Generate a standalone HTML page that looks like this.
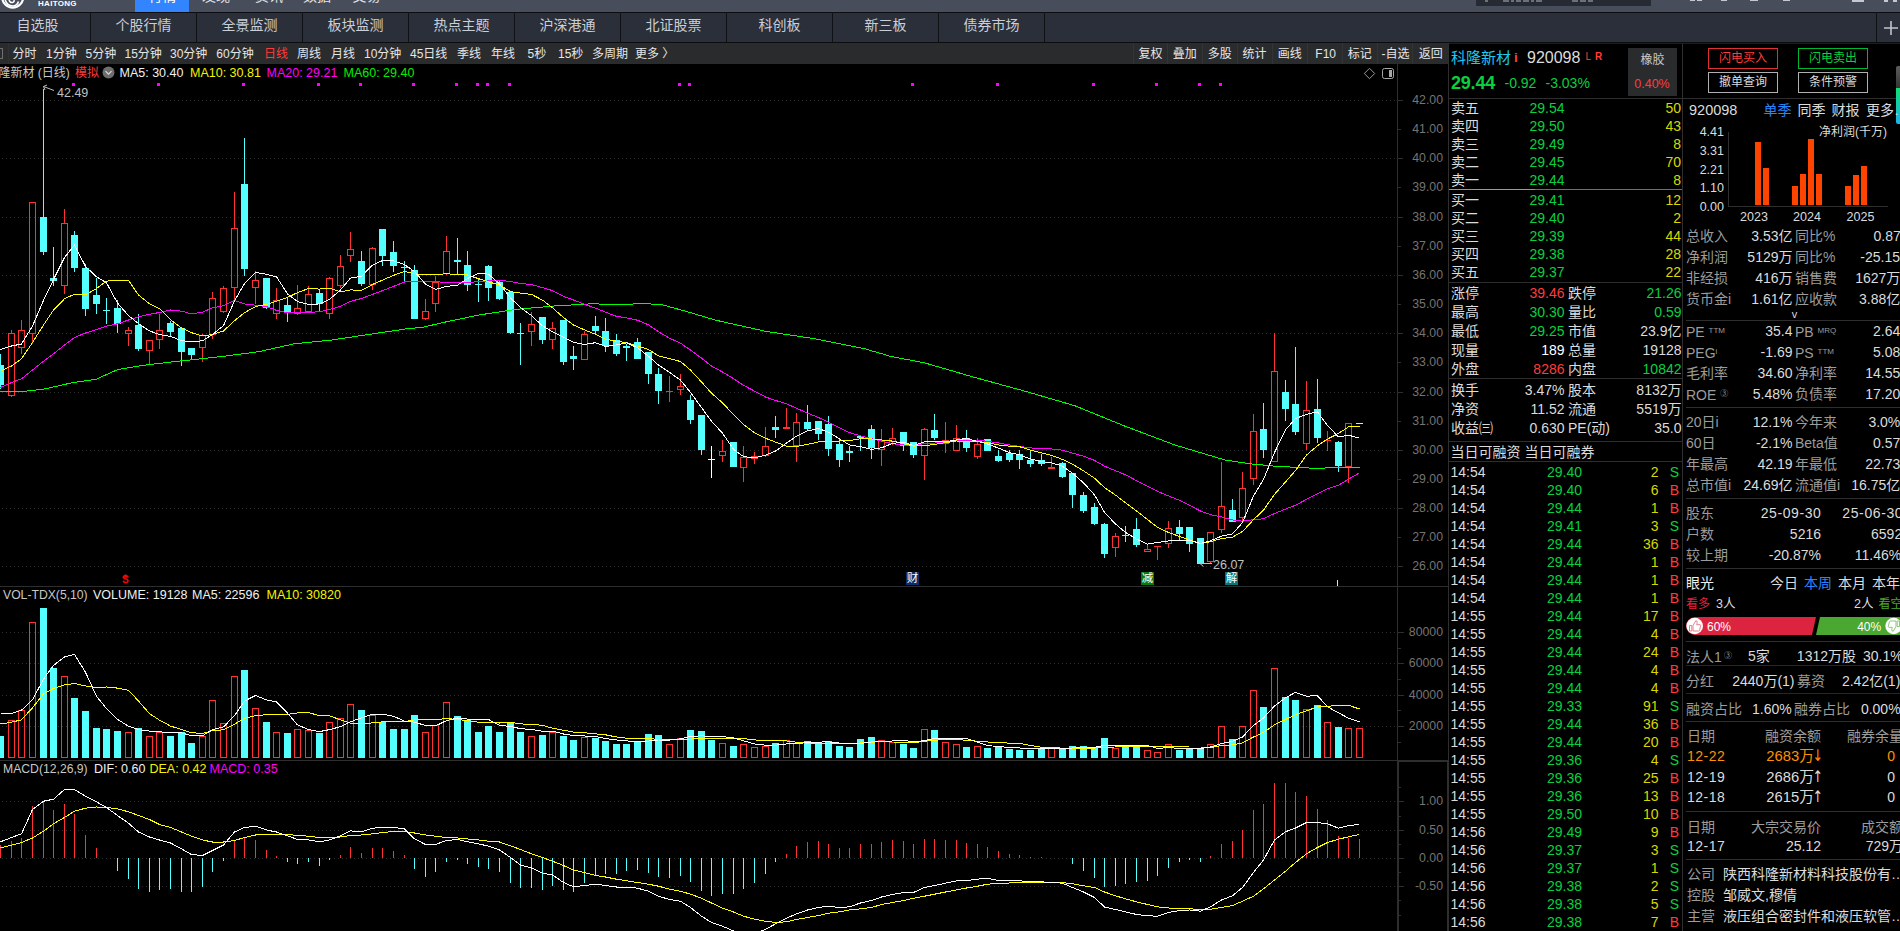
<!DOCTYPE html>
<html><head><meta charset="utf-8"><title>科隆新材 920098</title>
<style>
html,body{margin:0;padding:0;background:#000}
body{width:1900px;height:931px;position:relative;overflow:hidden;font-family:"Liberation Sans","Noto Sans CJK SC",sans-serif}
.b{position:absolute;display:block}
.t{position:absolute;display:block;white-space:nowrap;line-height:20px;font-family:"Liberation Sans","Noto Sans CJK SC",sans-serif}
small{font-size:8px;vertical-align:4px;letter-spacing:0}
i{display:inline-block;font-style:normal;font-size:16px;line-height:0;font-family:"DejaVu Sans",sans-serif;transform:scaleX(.78);margin:0 -4px 0 -3.2px}
</style></head><body>
<div class="b" style="left:0px;top:0px;width:1900px;height:12px;background:#474d5b"></div>
<div class="b" style="left:0px;top:12px;width:1900px;height:1px;background:#0c0d10"></div>
<div class="b" style="left:135px;top:0px;width:54px;height:12px;background:#3385ff"></div>
<div class="b" style="left:0;top:0;width:1900px;height:12px;overflow:hidden">
<svg class="b" style="left:0;top:0" width="30" height="12" viewBox="0 0 30 12"><circle cx="12.7" cy="-2.9" r="10.5" fill="none" stroke="#fff" stroke-width="2.2"/><path d="M5.2,0 Q7,5.8 12.5,6 Q17,6 18.5,1.5" fill="none" stroke="#fff" stroke-width="1.7"/><path d="M9,0 Q10,3 12.5,2.5 Q14.5,2 14,0" fill="none" stroke="#fff" stroke-width="1.5"/></svg>
<span class="t" style="left:38px;top:-3.2px;font-size:8px;font-weight:bold;color:#fff;line-height:14px;letter-spacing:0.3px">HAITONG</span>
<span class="t" style="left:148.5px;top:-14.2px;font-size:14px;color:#fff;line-height:20px">行情</span>
<span class="t" style="left:202px;top:-14.2px;font-size:14px;color:#e0e3ea;line-height:20px">发现</span>
<span class="t" style="left:255px;top:-14.2px;font-size:14px;color:#e0e3ea;line-height:20px">资讯</span>
<span class="t" style="left:303px;top:-14.2px;font-size:14px;color:#e0e3ea;line-height:20px">数据</span>
<span class="t" style="left:352.5px;top:-14.2px;font-size:14px;color:#e0e3ea;line-height:20px">交易</span>
</div>
<div class="b" style="left:1476px;top:0px;width:175px;height:6px;background:#262a33"></div>
<div class="b" style="left:1485px;top:0px;width:3px;height:2px;background:#6a707c"></div>
<div class="b" style="left:1503px;top:0px;width:6px;height:2px;background:#6a707c"></div>
<div class="b" style="left:1511px;top:0px;width:3px;height:2px;background:#6a707c"></div>
<div class="b" style="left:1516px;top:0px;width:5px;height:2px;background:#6a707c"></div>
<div class="b" style="left:1523px;top:0px;width:6px;height:2px;background:#6a707c"></div>
<div class="b" style="left:1531px;top:0px;width:3px;height:2px;background:#6a707c"></div>
<div class="b" style="left:1536px;top:0px;width:6px;height:2px;background:#6a707c"></div>
<div class="b" style="left:1572px;top:0px;width:6px;height:2px;background:#6a707c"></div>
<div class="b" style="left:1580px;top:0px;width:6px;height:2px;background:#6a707c"></div>
<div class="b" style="left:1588px;top:0px;width:5px;height:2px;background:#6a707c"></div>
<div class="b" style="left:1690px;top:0px;width:5px;height:1px;background:#c4c8d0"></div>
<div class="b" style="left:1697px;top:0px;width:5px;height:1px;background:#c4c8d0"></div>
<div class="b" style="left:1721px;top:0px;width:6px;height:1px;background:#c4c8d0"></div>
<div class="b" style="left:1750px;top:0px;width:8px;height:1px;background:#c4c8d0"></div>
<div class="b" style="left:1783px;top:0px;width:7px;height:1px;background:#c4c8d0"></div>
<div class="b" style="left:1852px;top:0px;width:12px;height:2px;background:#c4c8d0"></div>
<div class="b" style="left:1884px;top:0px;width:4px;height:2px;background:#c4c8d0"></div>
<div class="b" style="left:1893px;top:0px;width:4px;height:2px;background:#c4c8d0"></div>
<div class="b" style="left:0px;top:13px;width:1900px;height:29px;background:#2b2f39"></div>
<span class="t" style="left:-162.5px;width:400px;text-align:center;top:15.2px;font-size:14px;color:#c9ced8;">自选股</span>
<div class="b" style="left:90px;top:12px;width:1px;height:31px;background:#101114"></div>
<span class="t" style="left:-56.5px;width:400px;text-align:center;top:15.2px;font-size:14px;color:#c9ced8;">个股行情</span>
<div class="b" style="left:196px;top:12px;width:1px;height:31px;background:#101114"></div>
<span class="t" style="left:49.5px;width:400px;text-align:center;top:15.2px;font-size:14px;color:#c9ced8;">全景监测</span>
<div class="b" style="left:302px;top:12px;width:1px;height:31px;background:#101114"></div>
<span class="t" style="left:155.5px;width:400px;text-align:center;top:15.2px;font-size:14px;color:#c9ced8;">板块监测</span>
<div class="b" style="left:408px;top:12px;width:1px;height:31px;background:#101114"></div>
<span class="t" style="left:261.5px;width:400px;text-align:center;top:15.2px;font-size:14px;color:#c9ced8;">热点主题</span>
<div class="b" style="left:514px;top:12px;width:1px;height:31px;background:#101114"></div>
<span class="t" style="left:367.5px;width:400px;text-align:center;top:15.2px;font-size:14px;color:#c9ced8;">沪深港通</span>
<div class="b" style="left:620px;top:12px;width:1px;height:31px;background:#101114"></div>
<span class="t" style="left:473.5px;width:400px;text-align:center;top:15.2px;font-size:14px;color:#c9ced8;">北证股票</span>
<div class="b" style="left:726px;top:12px;width:1px;height:31px;background:#101114"></div>
<span class="t" style="left:579.5px;width:400px;text-align:center;top:15.2px;font-size:14px;color:#c9ced8;">科创板</span>
<div class="b" style="left:832px;top:12px;width:1px;height:31px;background:#101114"></div>
<span class="t" style="left:685.5px;width:400px;text-align:center;top:15.2px;font-size:14px;color:#c9ced8;">新三板</span>
<div class="b" style="left:938px;top:12px;width:1px;height:31px;background:#101114"></div>
<span class="t" style="left:791.5px;width:400px;text-align:center;top:15.2px;font-size:14px;color:#c9ced8;">债券市场</span>
<div class="b" style="left:1044px;top:12px;width:1px;height:31px;background:#101114"></div>
<div class="b" style="left:1876px;top:12px;width:1px;height:31px;background:#101114"></div>
<svg class="b" style="left:1882.7px;top:19.8px" width="16" height="16" viewBox="0 0 16 16"><path d="M8,1V15M1,8H15" stroke="#c0c4cc" stroke-width="1.6" fill="none"/></svg>
<div class="b" style="left:0px;top:42px;width:1900px;height:1px;background:#0c0d10"></div>
<div class="b" style="left:0px;top:43px;width:1448px;height:21px;background:#2a2b2d"></div>
<div class="b" style="left:1133px;top:43px;width:1px;height:21px;background:#333436"></div>
<div class="b" style="left:1167px;top:43px;width:1px;height:21px;background:#333436"></div>
<div class="b" style="left:1202px;top:43px;width:1px;height:21px;background:#333436"></div>
<div class="b" style="left:1237px;top:43px;width:1px;height:21px;background:#333436"></div>
<div class="b" style="left:1272px;top:43px;width:1px;height:21px;background:#333436"></div>
<div class="b" style="left:1307px;top:43px;width:1px;height:21px;background:#333436"></div>
<div class="b" style="left:1342px;top:43px;width:1px;height:21px;background:#333436"></div>
<div class="b" style="left:1377px;top:43px;width:1px;height:21px;background:#333436"></div>
<div class="b" style="left:1412px;top:43px;width:1px;height:21px;background:#333436"></div>
<div class="b" style="left:0px;top:48px;width:3px;height:11px;border:1px solid #707070;border-left:none;box-sizing:border-box;border-radius:0 1px 1px 0"></div>
<div class="b" style="left:8px;top:43px;width:1px;height:21px;background:#303133"></div>
<span class="t" style="left:12.5px;top:43.5px;font-size:12px;color:#e6e6e6;">分时</span>
<span class="t" style="left:46px;top:43.5px;font-size:12px;color:#e6e6e6;">1分钟</span>
<span class="t" style="left:85.5px;top:43.5px;font-size:12px;color:#e6e6e6;">5分钟</span>
<span class="t" style="left:124.5px;top:43.5px;font-size:12px;color:#e6e6e6;">15分钟</span>
<span class="t" style="left:170px;top:43.5px;font-size:12px;color:#e6e6e6;">30分钟</span>
<span class="t" style="left:216.3px;top:43.5px;font-size:12px;color:#e6e6e6;">60分钟</span>
<span class="t" style="left:264px;top:43.5px;font-size:12px;color:#ff3c3c;">日线</span>
<span class="t" style="left:297px;top:43.5px;font-size:12px;color:#e6e6e6;">周线</span>
<span class="t" style="left:331px;top:43.5px;font-size:12px;color:#e6e6e6;">月线</span>
<span class="t" style="left:364px;top:43.5px;font-size:12px;color:#e6e6e6;">10分钟</span>
<span class="t" style="left:410px;top:43.5px;font-size:12px;color:#e6e6e6;">45日线</span>
<span class="t" style="left:457px;top:43.5px;font-size:12px;color:#e6e6e6;">季线</span>
<span class="t" style="left:491px;top:43.5px;font-size:12px;color:#e6e6e6;">年线</span>
<span class="t" style="left:527.5px;top:43.5px;font-size:12px;color:#e6e6e6;">5秒</span>
<span class="t" style="left:558px;top:43.5px;font-size:12px;color:#e6e6e6;">15秒</span>
<span class="t" style="left:592px;top:43.5px;font-size:12px;color:#e6e6e6;">多周期</span>
<span class="t" style="left:635px;top:43.5px;font-size:12px;color:#e6e6e6;">更多 〉</span>
<span class="t" style="left:1138.5px;top:43.5px;font-size:12px;color:#e6e6e6;">复权</span>
<span class="t" style="left:1172.7px;top:43.5px;font-size:12px;color:#e6e6e6;">叠加</span>
<span class="t" style="left:1207.7px;top:43.5px;font-size:12px;color:#e6e6e6;">多股</span>
<span class="t" style="left:1242.4px;top:43.5px;font-size:12px;color:#e6e6e6;">统计</span>
<span class="t" style="left:1277.7px;top:43.5px;font-size:12px;color:#e6e6e6;">画线</span>
<span class="t" style="left:1315.3px;top:43.5px;font-size:12px;color:#e6e6e6;">F10</span>
<span class="t" style="left:1347.8px;top:43.5px;font-size:12px;color:#e6e6e6;">标记</span>
<span class="t" style="left:1381.5px;top:43.5px;font-size:12px;color:#e6e6e6;">-自选</span>
<span class="t" style="left:1418.7px;top:43.5px;font-size:12px;color:#e6e6e6;">返回</span>
<svg class="b" style="left:0;top:64px" width="1448" height="867" viewBox="0 64 1448 867" shape-rendering="crispEdges">
<style>.ax{font:12.3px "Liberation Sans",sans-serif;fill:#747474}</style>
<rect x="0" y="586" width="1448" height="1" fill="#2e2e2e"/>
<rect x="0" y="760" width="1448" height="1" fill="#2e2e2e"/>
<rect x="1397" y="64" width="1" height="867" fill="#2e2e2e"/>
<rect x="1398" y="761" width="50" height="1" fill="#2e2e2e"/>
<rect x="1398" y="761" width="1" height="170" fill="#2e2e2e"/>
<rect x="1447" y="761" width="1" height="170" fill="#2e2e2e"/>
<line x1="2" y1="566.5" x2="1396" y2="566.5" stroke="#2e2e2e" stroke-width="1" stroke-dasharray="1 3"/>
<rect x="1398" y="566" width="5" height="1" fill="#2e2e2e"/>
<text x="1443" y="570" text-anchor="end" class="ax">26.00</text>
<rect x="1398" y="537" width="3" height="1" fill="#2e2e2e"/>
<text x="1443" y="541" text-anchor="end" class="ax">27.00</text>
<line x1="2" y1="508.5" x2="1396" y2="508.5" stroke="#2e2e2e" stroke-width="1" stroke-dasharray="1 3"/>
<rect x="1398" y="508" width="5" height="1" fill="#2e2e2e"/>
<text x="1443" y="512" text-anchor="end" class="ax">28.00</text>
<rect x="1398" y="479" width="3" height="1" fill="#2e2e2e"/>
<text x="1443" y="483" text-anchor="end" class="ax">29.00</text>
<line x1="2" y1="450.5" x2="1396" y2="450.5" stroke="#2e2e2e" stroke-width="1" stroke-dasharray="1 3"/>
<rect x="1398" y="450" width="5" height="1" fill="#2e2e2e"/>
<text x="1443" y="454" text-anchor="end" class="ax">30.00</text>
<rect x="1398" y="421" width="3" height="1" fill="#2e2e2e"/>
<text x="1443" y="425" text-anchor="end" class="ax">31.00</text>
<line x1="2" y1="392.5" x2="1396" y2="392.5" stroke="#2e2e2e" stroke-width="1" stroke-dasharray="1 3"/>
<rect x="1398" y="392" width="5" height="1" fill="#2e2e2e"/>
<text x="1443" y="396" text-anchor="end" class="ax">32.00</text>
<rect x="1398" y="362" width="3" height="1" fill="#2e2e2e"/>
<text x="1443" y="366" text-anchor="end" class="ax">33.00</text>
<line x1="2" y1="333.5" x2="1396" y2="333.5" stroke="#2e2e2e" stroke-width="1" stroke-dasharray="1 3"/>
<rect x="1398" y="333" width="5" height="1" fill="#2e2e2e"/>
<text x="1443" y="337" text-anchor="end" class="ax">34.00</text>
<rect x="1398" y="304" width="3" height="1" fill="#2e2e2e"/>
<text x="1443" y="308" text-anchor="end" class="ax">35.00</text>
<line x1="2" y1="275.5" x2="1396" y2="275.5" stroke="#2e2e2e" stroke-width="1" stroke-dasharray="1 3"/>
<rect x="1398" y="275" width="5" height="1" fill="#2e2e2e"/>
<text x="1443" y="279" text-anchor="end" class="ax">36.00</text>
<rect x="1398" y="246" width="3" height="1" fill="#2e2e2e"/>
<text x="1443" y="250" text-anchor="end" class="ax">37.00</text>
<line x1="2" y1="217.5" x2="1396" y2="217.5" stroke="#2e2e2e" stroke-width="1" stroke-dasharray="1 3"/>
<rect x="1398" y="217" width="5" height="1" fill="#2e2e2e"/>
<text x="1443" y="221" text-anchor="end" class="ax">38.00</text>
<rect x="1398" y="187" width="3" height="1" fill="#2e2e2e"/>
<text x="1443" y="191" text-anchor="end" class="ax">39.00</text>
<line x1="2" y1="158.5" x2="1396" y2="158.5" stroke="#2e2e2e" stroke-width="1" stroke-dasharray="1 3"/>
<rect x="1398" y="158" width="5" height="1" fill="#2e2e2e"/>
<text x="1443" y="162" text-anchor="end" class="ax">40.00</text>
<rect x="1398" y="129" width="3" height="1" fill="#2e2e2e"/>
<text x="1443" y="133" text-anchor="end" class="ax">41.00</text>
<line x1="2" y1="100.5" x2="1396" y2="100.5" stroke="#2e2e2e" stroke-width="1" stroke-dasharray="1 3"/>
<rect x="1398" y="100" width="5" height="1" fill="#2e2e2e"/>
<text x="1443" y="104" text-anchor="end" class="ax">42.00</text>
<line x1="2" y1="726.5" x2="1396" y2="726.5" stroke="#2e2e2e" stroke-width="1" stroke-dasharray="1 3"/>
<rect x="1398" y="726" width="6" height="1" fill="#2e2e2e"/>
<text x="1443" y="730" text-anchor="end" class="ax">20000</text>
<rect x="1398" y="742" width="3" height="1" fill="#2e2e2e"/>
<line x1="2" y1="695.5" x2="1396" y2="695.5" stroke="#2e2e2e" stroke-width="1" stroke-dasharray="1 3"/>
<rect x="1398" y="695" width="6" height="1" fill="#2e2e2e"/>
<text x="1443" y="699" text-anchor="end" class="ax">40000</text>
<rect x="1398" y="710" width="3" height="1" fill="#2e2e2e"/>
<line x1="2" y1="663.5" x2="1396" y2="663.5" stroke="#2e2e2e" stroke-width="1" stroke-dasharray="1 3"/>
<rect x="1398" y="663" width="6" height="1" fill="#2e2e2e"/>
<text x="1443" y="667" text-anchor="end" class="ax">60000</text>
<rect x="1398" y="679" width="3" height="1" fill="#2e2e2e"/>
<line x1="2" y1="632.5" x2="1396" y2="632.5" stroke="#2e2e2e" stroke-width="1" stroke-dasharray="1 3"/>
<rect x="1398" y="632" width="6" height="1" fill="#2e2e2e"/>
<text x="1443" y="636" text-anchor="end" class="ax">80000</text>
<rect x="1398" y="648" width="3" height="1" fill="#2e2e2e"/>
<line x1="2" y1="801.5" x2="1396" y2="801.5" stroke="#2e2e2e" stroke-width="1" stroke-dasharray="1 3"/>
<rect x="1398" y="801" width="6" height="1" fill="#2e2e2e"/>
<text x="1443" y="805" text-anchor="end" class="ax">1.00</text>
<line x1="2" y1="830.5" x2="1396" y2="830.5" stroke="#2e2e2e" stroke-width="1" stroke-dasharray="1 3"/>
<rect x="1398" y="830" width="6" height="1" fill="#2e2e2e"/>
<text x="1443" y="834" text-anchor="end" class="ax">0.50</text>
<line x1="2" y1="858.5" x2="1396" y2="858.5" stroke="#2e2e2e" stroke-width="1" stroke-dasharray="1 3"/>
<rect x="1398" y="858" width="6" height="1" fill="#2e2e2e"/>
<text x="1443" y="862" text-anchor="end" class="ax">0.00</text>
<line x1="2" y1="886.5" x2="1396" y2="886.5" stroke="#2e2e2e" stroke-width="1" stroke-dasharray="1 3"/>
<rect x="1398" y="886" width="6" height="1" fill="#2e2e2e"/>
<text x="1443" y="890" text-anchor="end" class="ax">-0.50</text>
<rect x="1398" y="787" width="3" height="1" fill="#2e2e2e"/>
<rect x="1398" y="816" width="3" height="1" fill="#2e2e2e"/>
<rect x="1398" y="844" width="3" height="1" fill="#2e2e2e"/>
<rect x="1398" y="872" width="3" height="1" fill="#2e2e2e"/>
<rect x="1398" y="900" width="3" height="1" fill="#2e2e2e"/>
<rect x="1398" y="915" width="3" height="1" fill="#2e2e2e"/>
<rect x="0" y="354" width="1" height="35" fill="#54ffff"/>
<rect x="-3" y="365" width="7" height="20" fill="#54ffff"/>
<rect x="11" y="330" width="1" height="3" fill="#ff3232"/>
<rect x="11" y="396" width="1" height="1" fill="#ff3232"/>
<rect x="8.5" y="333.5" width="6" height="62" fill="none" stroke="#ff3232" stroke-width="1"/>
<rect x="21" y="320" width="1" height="10" fill="#ff3232"/>
<rect x="21" y="348" width="1" height="6" fill="#ff3232"/>
<rect x="18.5" y="330.5" width="6" height="17" fill="none" stroke="#ff3232" stroke-width="1"/>
<rect x="32" y="334" width="1" height="10" fill="#ff3232"/>
<rect x="29.5" y="202.5" width="6" height="131" fill="none" stroke="#ff3232" stroke-width="1"/>
<rect x="43" y="89" width="1" height="166" fill="#54ffff"/>
<rect x="40" y="217" width="7" height="35" fill="#54ffff"/>
<rect x="53" y="247" width="1" height="39" fill="#54ffff"/>
<rect x="50" y="278" width="7" height="3" fill="#54ffff"/>
<rect x="64" y="209" width="1" height="14" fill="#ff3232"/>
<rect x="64" y="286" width="1" height="8" fill="#ff3232"/>
<rect x="61.5" y="223.5" width="6" height="62" fill="none" stroke="#ff3232" stroke-width="1"/>
<rect x="74" y="231" width="1" height="41" fill="#54ffff"/>
<rect x="71" y="235" width="7" height="33" fill="#54ffff"/>
<rect x="85" y="264" width="1" height="52" fill="#54ffff"/>
<rect x="82" y="268" width="7" height="41" fill="#54ffff"/>
<rect x="96" y="278" width="1" height="36" fill="#54ffff"/>
<rect x="93" y="295" width="7" height="9" fill="#54ffff"/>
<rect x="106" y="298" width="1" height="26" fill="#54ffff"/>
<rect x="103" y="310" width="7" height="1" fill="#54ffff"/>
<rect x="117" y="300" width="1" height="33" fill="#54ffff"/>
<rect x="114" y="308" width="7" height="16" fill="#54ffff"/>
<rect x="128" y="327" width="1" height="3" fill="#ff3232"/>
<rect x="128" y="334" width="1" height="12" fill="#ff3232"/>
<rect x="125.5" y="330.5" width="6" height="3" fill="none" stroke="#ff3232" stroke-width="1"/>
<rect x="138" y="314" width="1" height="37" fill="#54ffff"/>
<rect x="135" y="325" width="7" height="24" fill="#54ffff"/>
<rect x="149" y="351" width="1" height="13" fill="#ff3232"/>
<rect x="146.5" y="340.5" width="6" height="10" fill="none" stroke="#ff3232" stroke-width="1"/>
<rect x="159" y="314" width="1" height="16" fill="#ff3232"/>
<rect x="159" y="340" width="1" height="9" fill="#ff3232"/>
<rect x="156.5" y="330.5" width="6" height="9" fill="none" stroke="#ff3232" stroke-width="1"/>
<rect x="170" y="321" width="1" height="15" fill="#54ffff"/>
<rect x="167" y="323" width="7" height="9" fill="#54ffff"/>
<rect x="181" y="327" width="1" height="39" fill="#54ffff"/>
<rect x="178" y="328" width="7" height="24" fill="#54ffff"/>
<rect x="191" y="348" width="1" height="11" fill="#54ffff"/>
<rect x="188" y="348" width="7" height="7" fill="#54ffff"/>
<rect x="202" y="334" width="1" height="1" fill="#ff3232"/>
<rect x="202" y="348" width="1" height="14" fill="#ff3232"/>
<rect x="199.5" y="335.5" width="6" height="12" fill="none" stroke="#ff3232" stroke-width="1"/>
<rect x="212" y="292" width="1" height="6" fill="#ff3232"/>
<rect x="212" y="335" width="1" height="4" fill="#ff3232"/>
<rect x="209.5" y="298.5" width="6" height="36" fill="none" stroke="#ff3232" stroke-width="1"/>
<rect x="223" y="286" width="1" height="2" fill="#ff3232"/>
<rect x="223" y="312" width="1" height="1" fill="#ff3232"/>
<rect x="220.5" y="288.5" width="6" height="23" fill="none" stroke="#ff3232" stroke-width="1"/>
<rect x="234" y="192" width="1" height="36" fill="#ff3232"/>
<rect x="234" y="288" width="1" height="12" fill="#ff3232"/>
<rect x="231.5" y="228.5" width="6" height="59" fill="none" stroke="#ff3232" stroke-width="1"/>
<rect x="244" y="138" width="1" height="138" fill="#54ffff"/>
<rect x="241" y="184" width="7" height="85" fill="#54ffff"/>
<rect x="255" y="271" width="1" height="9" fill="#ff3232"/>
<rect x="255" y="288" width="1" height="16" fill="#ff3232"/>
<rect x="252.5" y="280.5" width="6" height="7" fill="none" stroke="#ff3232" stroke-width="1"/>
<rect x="266" y="278" width="1" height="31" fill="#54ffff"/>
<rect x="263" y="278" width="7" height="30" fill="#54ffff"/>
<rect x="276" y="288" width="1" height="12" fill="#ff3232"/>
<rect x="276" y="314" width="1" height="5" fill="#ff3232"/>
<rect x="273.5" y="300.5" width="6" height="13" fill="none" stroke="#ff3232" stroke-width="1"/>
<rect x="287" y="297" width="1" height="25" fill="#54ffff"/>
<rect x="284" y="305" width="7" height="8" fill="#54ffff"/>
<rect x="297" y="285" width="1" height="23" fill="#ff3232"/>
<rect x="297" y="314" width="1" height="1" fill="#ff3232"/>
<rect x="294.5" y="308.5" width="6" height="5" fill="none" stroke="#ff3232" stroke-width="1"/>
<rect x="308" y="286" width="1" height="8" fill="#ff3232"/>
<rect x="305.5" y="294.5" width="6" height="17" fill="none" stroke="#ff3232" stroke-width="1"/>
<rect x="319" y="290" width="1" height="22" fill="#54ffff"/>
<rect x="316" y="293" width="7" height="11" fill="#54ffff"/>
<rect x="329" y="277" width="1" height="1" fill="#ff3232"/>
<rect x="329" y="314" width="1" height="5" fill="#ff3232"/>
<rect x="326.5" y="278.5" width="6" height="35" fill="none" stroke="#ff3232" stroke-width="1"/>
<rect x="340" y="255" width="1" height="11" fill="#ff3232"/>
<rect x="340" y="286" width="1" height="2" fill="#ff3232"/>
<rect x="337.5" y="266.5" width="6" height="19" fill="none" stroke="#ff3232" stroke-width="1"/>
<rect x="350" y="232" width="1" height="17" fill="#ff3232"/>
<rect x="350" y="256" width="1" height="6" fill="#ff3232"/>
<rect x="347.5" y="249.5" width="6" height="6" fill="none" stroke="#ff3232" stroke-width="1"/>
<rect x="361" y="251" width="1" height="35" fill="#54ffff"/>
<rect x="358" y="261" width="7" height="23" fill="#54ffff"/>
<rect x="372" y="247" width="1" height="1" fill="#ff3232"/>
<rect x="372" y="285" width="1" height="5" fill="#ff3232"/>
<rect x="369.5" y="248.5" width="6" height="36" fill="none" stroke="#ff3232" stroke-width="1"/>
<rect x="382" y="229" width="1" height="37" fill="#54ffff"/>
<rect x="379" y="229" width="7" height="27" fill="#54ffff"/>
<rect x="393" y="241" width="1" height="31" fill="#54ffff"/>
<rect x="390" y="252" width="7" height="14" fill="#54ffff"/>
<rect x="404" y="261" width="1" height="21" fill="#54ffff"/>
<rect x="401" y="267" width="7" height="1" fill="#54ffff"/>
<rect x="414" y="265" width="1" height="54" fill="#54ffff"/>
<rect x="411" y="270" width="7" height="49" fill="#54ffff"/>
<rect x="425" y="299" width="1" height="12" fill="#ff3232"/>
<rect x="425" y="319" width="1" height="1" fill="#ff3232"/>
<rect x="422.5" y="311.5" width="6" height="7" fill="none" stroke="#ff3232" stroke-width="1"/>
<rect x="435" y="276" width="1" height="6" fill="#ff3232"/>
<rect x="435" y="304" width="1" height="8" fill="#ff3232"/>
<rect x="432.5" y="282.5" width="6" height="21" fill="none" stroke="#ff3232" stroke-width="1"/>
<rect x="446" y="236" width="1" height="15" fill="#ff3232"/>
<rect x="446" y="274" width="1" height="1" fill="#ff3232"/>
<rect x="443.5" y="251.5" width="6" height="22" fill="none" stroke="#ff3232" stroke-width="1"/>
<rect x="457" y="238" width="1" height="36" fill="#54ffff"/>
<rect x="454" y="260" width="7" height="2" fill="#54ffff"/>
<rect x="467" y="251" width="1" height="40" fill="#54ffff"/>
<rect x="464" y="265" width="7" height="20" fill="#54ffff"/>
<rect x="478" y="279" width="1" height="23" fill="#54ffff"/>
<rect x="475" y="284" width="7" height="1" fill="#54ffff"/>
<rect x="488" y="265" width="1" height="36" fill="#54ffff"/>
<rect x="485" y="266" width="7" height="22" fill="#54ffff"/>
<rect x="499" y="281" width="1" height="19" fill="#54ffff"/>
<rect x="496" y="282" width="7" height="17" fill="#54ffff"/>
<rect x="510" y="292" width="1" height="42" fill="#54ffff"/>
<rect x="507" y="292" width="7" height="41" fill="#54ffff"/>
<rect x="520" y="323" width="1" height="42" fill="#54ffff"/>
<rect x="517" y="333" width="7" height="1" fill="#54ffff"/>
<rect x="531" y="312" width="1" height="12" fill="#ff3232"/>
<rect x="531" y="332" width="1" height="14" fill="#ff3232"/>
<rect x="528.5" y="324.5" width="6" height="7" fill="none" stroke="#ff3232" stroke-width="1"/>
<rect x="542" y="317" width="1" height="27" fill="#54ffff"/>
<rect x="539" y="317" width="7" height="23" fill="#54ffff"/>
<rect x="552" y="322" width="1" height="6" fill="#ff3232"/>
<rect x="552" y="340" width="1" height="9" fill="#ff3232"/>
<rect x="549.5" y="328.5" width="6" height="11" fill="none" stroke="#ff3232" stroke-width="1"/>
<rect x="563" y="320" width="1" height="45" fill="#54ffff"/>
<rect x="560" y="320" width="7" height="42" fill="#54ffff"/>
<rect x="573" y="346" width="1" height="24" fill="#54ffff"/>
<rect x="570" y="356" width="7" height="3" fill="#54ffff"/>
<rect x="584" y="331" width="1" height="3" fill="#ff3232"/>
<rect x="581.5" y="334.5" width="6" height="25" fill="none" stroke="#ff3232" stroke-width="1"/>
<rect x="595" y="316" width="1" height="18" fill="#54ffff"/>
<rect x="592" y="326" width="7" height="5" fill="#54ffff"/>
<rect x="605" y="318" width="1" height="34" fill="#54ffff"/>
<rect x="602" y="331" width="7" height="15" fill="#54ffff"/>
<rect x="616" y="334" width="1" height="22" fill="#54ffff"/>
<rect x="613" y="340" width="7" height="14" fill="#54ffff"/>
<rect x="626" y="344" width="1" height="17" fill="#54ffff"/>
<rect x="623" y="346" width="7" height="2" fill="#54ffff"/>
<rect x="637" y="338" width="1" height="21" fill="#54ffff"/>
<rect x="634" y="342" width="7" height="17" fill="#54ffff"/>
<rect x="648" y="352" width="1" height="32" fill="#54ffff"/>
<rect x="645" y="352" width="7" height="22" fill="#54ffff"/>
<rect x="658" y="368" width="1" height="36" fill="#54ffff"/>
<rect x="655" y="374" width="7" height="17" fill="#54ffff"/>
<rect x="669" y="376" width="1" height="15" fill="#ff3232"/>
<rect x="669" y="392" width="1" height="10" fill="#ff3232"/>
<rect x="666" y="391" width="7" height="1" fill="#ff3232"/>
<rect x="680" y="374" width="1" height="12" fill="#ff3232"/>
<rect x="680" y="390" width="1" height="5" fill="#ff3232"/>
<rect x="677.5" y="386.5" width="6" height="3" fill="none" stroke="#ff3232" stroke-width="1"/>
<rect x="690" y="395" width="1" height="29" fill="#54ffff"/>
<rect x="687" y="400" width="7" height="20" fill="#54ffff"/>
<rect x="701" y="415" width="1" height="40" fill="#54ffff"/>
<rect x="698" y="415" width="7" height="35" fill="#54ffff"/>
<rect x="711" y="446" width="1" height="32" fill="#ffffff"/>
<rect x="708" y="459" width="7" height="1" fill="#ffffff"/>
<rect x="722" y="440" width="1" height="11" fill="#ff3232"/>
<rect x="722" y="456" width="1" height="6" fill="#ff3232"/>
<rect x="719.5" y="451.5" width="6" height="4" fill="none" stroke="#ff3232" stroke-width="1"/>
<rect x="733" y="442" width="1" height="25" fill="#54ffff"/>
<rect x="730" y="442" width="7" height="25" fill="#54ffff"/>
<rect x="743" y="446" width="1" height="11" fill="#ff3232"/>
<rect x="743" y="468" width="1" height="14" fill="#ff3232"/>
<rect x="740.5" y="457.5" width="6" height="10" fill="none" stroke="#ff3232" stroke-width="1"/>
<rect x="754" y="452" width="1" height="4" fill="#ff3232"/>
<rect x="754" y="459" width="1" height="5" fill="#ff3232"/>
<rect x="751.5" y="456.5" width="6" height="2" fill="none" stroke="#ff3232" stroke-width="1"/>
<rect x="765" y="427" width="1" height="19" fill="#ff3232"/>
<rect x="765" y="456" width="1" height="1" fill="#ff3232"/>
<rect x="762.5" y="446.5" width="6" height="9" fill="none" stroke="#ff3232" stroke-width="1"/>
<rect x="775" y="416" width="1" height="22" fill="#54ffff"/>
<rect x="772" y="427" width="7" height="3" fill="#54ffff"/>
<rect x="786" y="408" width="1" height="19" fill="#ff3232"/>
<rect x="783.5" y="427.5" width="6" height="1" fill="none" stroke="#ff3232" stroke-width="1"/>
<rect x="796" y="413" width="1" height="9" fill="#ff3232"/>
<rect x="796" y="446" width="1" height="16" fill="#ff3232"/>
<rect x="793.5" y="422.5" width="6" height="23" fill="none" stroke="#ff3232" stroke-width="1"/>
<rect x="807" y="405" width="1" height="26" fill="#54ffff"/>
<rect x="804" y="422" width="7" height="7" fill="#54ffff"/>
<rect x="818" y="421" width="1" height="19" fill="#54ffff"/>
<rect x="815" y="421" width="7" height="13" fill="#54ffff"/>
<rect x="828" y="416" width="1" height="40" fill="#54ffff"/>
<rect x="825" y="424" width="7" height="25" fill="#54ffff"/>
<rect x="839" y="438" width="1" height="29" fill="#54ffff"/>
<rect x="836" y="444" width="7" height="16" fill="#54ffff"/>
<rect x="849" y="446" width="1" height="16" fill="#54ffff"/>
<rect x="846" y="451" width="7" height="2" fill="#54ffff"/>
<rect x="860" y="435" width="1" height="16" fill="#54ffff"/>
<rect x="857" y="436" width="7" height="2" fill="#54ffff"/>
<rect x="871" y="425" width="1" height="34" fill="#54ffff"/>
<rect x="868" y="429" width="7" height="19" fill="#54ffff"/>
<rect x="881" y="429" width="1" height="11" fill="#ff3232"/>
<rect x="881" y="450" width="1" height="16" fill="#ff3232"/>
<rect x="878.5" y="440.5" width="6" height="9" fill="none" stroke="#ff3232" stroke-width="1"/>
<rect x="892" y="428" width="1" height="10" fill="#ff3232"/>
<rect x="892" y="442" width="1" height="3" fill="#ff3232"/>
<rect x="889.5" y="438.5" width="6" height="3" fill="none" stroke="#ff3232" stroke-width="1"/>
<rect x="903" y="432" width="1" height="19" fill="#54ffff"/>
<rect x="900" y="432" width="7" height="14" fill="#54ffff"/>
<rect x="913" y="442" width="1" height="16" fill="#54ffff"/>
<rect x="910" y="442" width="7" height="13" fill="#54ffff"/>
<rect x="924" y="428" width="1" height="1" fill="#ff3232"/>
<rect x="924" y="456" width="1" height="24" fill="#ff3232"/>
<rect x="921.5" y="429.5" width="6" height="26" fill="none" stroke="#ff3232" stroke-width="1"/>
<rect x="934" y="414" width="1" height="26" fill="#54ffff"/>
<rect x="931" y="430" width="7" height="8" fill="#54ffff"/>
<rect x="945" y="422" width="1" height="18" fill="#ff3232"/>
<rect x="945" y="444" width="1" height="9" fill="#ff3232"/>
<rect x="942.5" y="440.5" width="6" height="3" fill="none" stroke="#ff3232" stroke-width="1"/>
<rect x="956" y="425" width="1" height="13" fill="#ff3232"/>
<rect x="953.5" y="438.5" width="6" height="12" fill="none" stroke="#ff3232" stroke-width="1"/>
<rect x="966" y="430" width="1" height="22" fill="#54ffff"/>
<rect x="963" y="438" width="7" height="10" fill="#54ffff"/>
<rect x="977" y="438" width="1" height="6" fill="#ff3232"/>
<rect x="977" y="457" width="1" height="2" fill="#ff3232"/>
<rect x="974.5" y="444.5" width="6" height="12" fill="none" stroke="#ff3232" stroke-width="1"/>
<rect x="987" y="439" width="1" height="12" fill="#54ffff"/>
<rect x="984" y="439" width="7" height="12" fill="#54ffff"/>
<rect x="998" y="450" width="1" height="12" fill="#54ffff"/>
<rect x="995" y="456" width="7" height="5" fill="#54ffff"/>
<rect x="1009" y="450" width="1" height="12" fill="#54ffff"/>
<rect x="1006" y="453" width="7" height="7" fill="#54ffff"/>
<rect x="1019" y="450" width="1" height="19" fill="#54ffff"/>
<rect x="1016" y="454" width="7" height="6" fill="#54ffff"/>
<rect x="1030" y="451" width="1" height="16" fill="#54ffff"/>
<rect x="1027" y="460" width="7" height="4" fill="#54ffff"/>
<rect x="1041" y="454" width="1" height="12" fill="#54ffff"/>
<rect x="1038" y="460" width="7" height="4" fill="#54ffff"/>
<rect x="1051" y="457" width="1" height="10" fill="#ff3232"/>
<rect x="1048.5" y="467.5" width="6" height="1" fill="none" stroke="#ff3232" stroke-width="1"/>
<rect x="1062" y="462" width="1" height="16" fill="#54ffff"/>
<rect x="1059" y="463" width="7" height="14" fill="#54ffff"/>
<rect x="1072" y="473" width="1" height="35" fill="#54ffff"/>
<rect x="1069" y="473" width="7" height="22" fill="#54ffff"/>
<rect x="1083" y="492" width="1" height="21" fill="#54ffff"/>
<rect x="1080" y="495" width="7" height="16" fill="#54ffff"/>
<rect x="1094" y="503" width="1" height="22" fill="#54ffff"/>
<rect x="1091" y="507" width="7" height="17" fill="#54ffff"/>
<rect x="1104" y="523" width="1" height="35" fill="#54ffff"/>
<rect x="1101" y="524" width="7" height="30" fill="#54ffff"/>
<rect x="1115" y="533" width="1" height="3" fill="#ff3232"/>
<rect x="1115" y="548" width="1" height="9" fill="#ff3232"/>
<rect x="1112.5" y="536.5" width="6" height="11" fill="none" stroke="#ff3232" stroke-width="1"/>
<rect x="1125" y="526" width="1" height="16" fill="#54ffff"/>
<rect x="1122" y="535" width="7" height="1" fill="#54ffff"/>
<rect x="1136" y="518" width="1" height="29" fill="#54ffff"/>
<rect x="1133" y="529" width="7" height="16" fill="#54ffff"/>
<rect x="1147" y="545" width="1" height="4" fill="#ff3232"/>
<rect x="1144.5" y="549.5" width="6" height="2" fill="none" stroke="#ff3232" stroke-width="1"/>
<rect x="1157" y="547" width="1" height="13" fill="#ff3232"/>
<rect x="1154" y="546" width="7" height="1" fill="#ff3232"/>
<rect x="1168" y="521" width="1" height="7" fill="#ff3232"/>
<rect x="1168" y="544" width="1" height="4" fill="#ff3232"/>
<rect x="1165.5" y="528.5" width="6" height="15" fill="none" stroke="#ff3232" stroke-width="1"/>
<rect x="1179" y="520" width="1" height="21" fill="#54ffff"/>
<rect x="1176" y="527" width="7" height="7" fill="#54ffff"/>
<rect x="1189" y="527" width="1" height="25" fill="#54ffff"/>
<rect x="1186" y="527" width="7" height="17" fill="#54ffff"/>
<rect x="1200" y="538" width="1" height="26" fill="#54ffff"/>
<rect x="1197" y="538" width="7" height="26" fill="#54ffff"/>
<rect x="1210" y="562" width="1" height="2" fill="#ff3232"/>
<rect x="1207.5" y="532.5" width="6" height="29" fill="none" stroke="#ff3232" stroke-width="1"/>
<rect x="1221" y="462" width="1" height="44" fill="#ff3232"/>
<rect x="1221" y="530" width="1" height="3" fill="#ff3232"/>
<rect x="1218.5" y="506.5" width="6" height="23" fill="none" stroke="#ff3232" stroke-width="1"/>
<rect x="1232" y="499" width="1" height="23" fill="#54ffff"/>
<rect x="1229" y="510" width="7" height="12" fill="#54ffff"/>
<rect x="1242" y="472" width="1" height="16" fill="#ff3232"/>
<rect x="1242" y="518" width="1" height="3" fill="#ff3232"/>
<rect x="1239.5" y="488.5" width="6" height="29" fill="none" stroke="#ff3232" stroke-width="1"/>
<rect x="1253" y="414" width="1" height="17" fill="#ff3232"/>
<rect x="1253" y="479" width="1" height="6" fill="#ff3232"/>
<rect x="1250.5" y="431.5" width="6" height="47" fill="none" stroke="#ff3232" stroke-width="1"/>
<rect x="1263" y="403" width="1" height="55" fill="#54ffff"/>
<rect x="1260" y="429" width="7" height="21" fill="#54ffff"/>
<rect x="1274" y="333" width="1" height="38" fill="#ff3232"/>
<rect x="1271.5" y="371.5" width="6" height="90" fill="none" stroke="#ff3232" stroke-width="1"/>
<rect x="1285" y="380" width="1" height="41" fill="#54ffff"/>
<rect x="1282" y="392" width="7" height="17" fill="#54ffff"/>
<rect x="1295" y="347" width="1" height="88" fill="#54ffff"/>
<rect x="1292" y="404" width="7" height="28" fill="#54ffff"/>
<rect x="1306" y="381" width="1" height="29" fill="#ff3232"/>
<rect x="1306" y="444" width="1" height="6" fill="#ff3232"/>
<rect x="1303.5" y="410.5" width="6" height="33" fill="none" stroke="#ff3232" stroke-width="1"/>
<rect x="1317" y="379" width="1" height="64" fill="#54ffff"/>
<rect x="1314" y="409" width="7" height="29" fill="#54ffff"/>
<rect x="1327" y="431" width="1" height="9" fill="#ff3232"/>
<rect x="1327" y="441" width="1" height="10" fill="#ff3232"/>
<rect x="1324" y="440" width="7" height="1" fill="#ff3232"/>
<rect x="1338" y="441" width="1" height="31" fill="#54ffff"/>
<rect x="1335" y="442" width="7" height="24" fill="#54ffff"/>
<rect x="1348" y="467" width="1" height="16" fill="#ff3232"/>
<rect x="1345.5" y="423.5" width="6" height="43" fill="none" stroke="#ff3232" stroke-width="1"/>
<rect x="1356" y="423" width="7" height="1" fill="#ffff00"/>
<polyline points="0.0,391.8 22.0,391.6 44.2,389.0 73.7,382.4 95.8,379.4 117.9,369.5 147.4,364.7 180.5,361.0 221.0,356.6 258.0,351.8 294.8,343.7 331.6,340.0 368.5,334.5 405.3,329.0 423.7,327.1 442.2,322.7 479.0,315.0 515.8,309.4 552.7,306.1 589.5,303.9 626.4,304.3 644.8,303.5 663.2,305.0 690.0,312.5 715.0,320.0 765.0,331.2 815.0,338.8 865.0,348.8 890.0,356.2 925.0,363.0 975.0,377.5 1025.0,391.2 1075.0,405.8 1125.0,426.2 1175.0,445.0 1225.0,460.0 1250.0,463.8 1275.0,466.2 1312.0,468.2 1360.0,467.5" fill="none" stroke="#00ff00" stroke-width="1"/>
<polyline points="0.5,387.5 11.5,382.5 21.5,378.8 32.5,370.0 43.5,361.2 53.5,353.8 64.5,345.0 74.5,337.5 85.5,333.0 96.5,329.5 106.5,326.2 117.5,323.8 128.5,320.0 138.5,316.8 149.5,314.2 159.5,312.5 170.5,310.0 181.5,311.2 191.5,313.8 202.5,312.2 212.5,307.9 223.5,305.6 234.5,300.5 244.5,303.9 255.5,305.2 266.5,306.6 276.5,310.4 287.5,312.7 297.5,312.7 308.5,312.2 319.5,311.9 329.5,309.5 340.5,306.3 350.5,301.3 361.5,298.5 372.5,294.4 382.5,290.6 393.5,286.4 404.5,282.0 414.5,281.2 425.5,281.8 435.5,281.6 446.5,282.7 457.5,282.4 467.5,282.7 478.5,281.6 488.5,280.9 499.5,280.2 510.5,281.5 520.5,283.5 531.5,284.5 542.5,287.6 552.5,290.6 563.5,296.3 573.5,300.0 584.5,304.3 595.5,308.1 605.5,312.1 616.5,316.4 626.5,317.9 637.5,320.2 648.5,324.8 658.5,331.8 669.5,338.2 680.5,343.2 690.5,350.0 701.5,358.1 711.5,366.1 722.5,372.0 733.5,378.6 743.5,385.3 754.5,391.1 765.5,397.0 775.5,400.4 786.5,403.8 796.5,408.2 807.5,413.1 818.5,417.5 828.5,422.2 839.5,427.8 849.5,432.6 860.5,435.8 871.5,438.6 881.5,441.1 892.5,443.7 903.5,445.0 913.5,445.2 924.5,443.7 934.5,443.1 945.5,441.8 956.5,440.8 966.5,440.4 977.5,440.3 987.5,441.3 998.5,443.0 1009.5,444.9 1019.5,446.4 1030.5,447.9 1041.5,448.6 1051.5,449.0 1062.5,450.2 1072.5,453.1 1083.5,456.2 1094.5,460.4 1104.5,466.2 1115.5,470.7 1125.5,474.8 1136.5,480.6 1147.5,486.1 1157.5,491.4 1168.5,495.9 1179.5,500.3 1189.5,505.3 1200.5,511.0 1210.5,514.6 1221.5,516.9 1232.5,520.0 1242.5,521.2 1253.5,519.6 1263.5,518.8 1274.5,513.5 1285.5,509.1 1295.5,505.2 1306.5,499.4 1317.5,493.6 1327.5,488.8 1338.5,485.3 1348.5,479.2 1359.5,472.8" fill="none" stroke="#ff00ff" stroke-width="1"/>
<polyline points="0.5,371.2 11.5,366.0 21.5,358.8 32.5,342.5 43.5,325.0 53.5,310.0 64.5,298.8 74.5,294.2 85.5,295.0 96.5,288.6 106.5,281.1 117.5,280.3 128.5,280.4 138.5,295.0 149.5,303.9 159.5,308.8 170.5,319.7 181.5,328.1 191.5,332.7 202.5,335.9 212.5,334.6 223.5,331.0 234.5,320.7 244.5,312.7 255.5,306.6 266.5,304.4 276.5,301.2 287.5,297.4 297.5,292.6 308.5,288.5 319.5,289.1 329.5,288.1 340.5,291.9 350.5,289.9 361.5,290.4 372.5,284.5 382.5,280.1 393.5,275.4 404.5,271.4 414.5,273.9 425.5,274.6 435.5,275.0 446.5,273.6 457.5,274.9 467.5,275.0 478.5,278.7 488.5,281.8 499.5,285.1 510.5,291.6 520.5,293.1 531.5,294.4 542.5,300.1 552.5,307.7 563.5,317.6 573.5,325.0 584.5,329.9 595.5,334.3 605.5,339.1 616.5,341.2 626.5,342.6 637.5,346.1 648.5,349.5 658.5,355.8 669.5,358.7 680.5,361.5 690.5,370.1 701.5,381.9 711.5,393.2 722.5,402.8 733.5,414.7 743.5,424.5 754.5,432.8 765.5,438.2 775.5,442.1 786.5,446.2 796.5,446.4 807.5,444.4 818.5,441.9 828.5,441.7 839.5,441.0 849.5,440.6 860.5,438.8 871.5,439.0 881.5,440.0 892.5,441.1 903.5,443.5 913.5,446.1 924.5,445.6 934.5,444.5 945.5,442.6 956.5,441.0 966.5,442.0 977.5,441.6 987.5,442.6 998.5,444.9 1009.5,446.2 1019.5,446.7 1030.5,450.2 1041.5,452.8 1051.5,455.4 1062.5,459.4 1072.5,464.1 1083.5,470.9 1094.5,478.2 1104.5,487.6 1115.5,495.1 1125.5,502.8 1136.5,510.9 1147.5,519.5 1157.5,527.4 1168.5,532.5 1179.5,536.4 1189.5,539.8 1200.5,543.8 1210.5,541.6 1221.5,538.6 1232.5,537.2 1242.5,531.5 1253.5,519.7 1263.5,510.1 1274.5,494.4 1285.5,481.9 1295.5,470.6 1306.5,455.1 1317.5,445.7 1327.5,439.1 1338.5,433.4 1348.5,426.9 1359.5,426.2" fill="none" stroke="#ffff00" stroke-width="1"/>
<polyline points="0.5,349.5 11.5,346.0 21.5,344.0 32.5,326.0 43.5,300.4 53.5,279.5 64.5,257.5 74.5,245.1 85.5,266.4 96.5,276.8 106.5,282.8 117.5,303.1 128.5,315.6 138.5,323.6 149.5,330.9 159.5,334.7 170.5,336.3 181.5,340.6 191.5,341.9 202.5,340.8 212.5,334.5 223.5,325.6 234.5,300.8 244.5,283.6 255.5,272.4 266.5,274.3 276.5,276.8 287.5,293.9 297.5,301.6 308.5,304.5 319.5,303.9 329.5,299.4 340.5,289.9 350.5,278.1 361.5,276.3 372.5,265.1 382.5,260.6 393.5,260.8 404.5,264.6 414.5,271.5 425.5,284.1 435.5,289.4 446.5,286.4 457.5,285.2 467.5,278.5 478.5,273.2 488.5,274.2 499.5,283.8 510.5,297.9 520.5,307.6 531.5,315.6 542.5,325.9 552.5,331.7 563.5,337.4 573.5,342.4 584.5,344.4 595.5,342.7 605.5,346.4 616.5,345.0 626.5,342.9 637.5,347.8 648.5,356.2 658.5,365.1 669.5,372.4 680.5,380.1 690.5,392.4 701.5,407.6 711.5,421.2 722.5,433.2 733.5,449.2 743.5,456.6 754.5,457.9 765.5,455.2 775.5,451.1 786.5,443.1 796.5,436.2 807.5,430.9 818.5,428.5 828.5,432.2 839.5,438.9 849.5,444.9 860.5,446.7 871.5,449.4 881.5,447.8 892.5,443.4 903.5,442.1 913.5,445.5 924.5,441.8 934.5,441.2 945.5,441.7 956.5,439.9 966.5,438.4 977.5,441.4 987.5,444.0 998.5,448.1 1009.5,452.6 1019.5,454.9 1030.5,458.9 1041.5,461.6 1051.5,462.8 1062.5,466.2 1072.5,473.3 1083.5,482.8 1094.5,494.9 1104.5,512.4 1115.5,524.0 1125.5,532.4 1136.5,539.1 1147.5,544.1 1157.5,542.4 1168.5,541.0 1179.5,540.5 1189.5,540.4 1200.5,543.4 1210.5,540.8 1221.5,536.2 1232.5,533.9 1242.5,522.6 1253.5,496.0 1263.5,479.5 1274.5,452.6 1285.5,429.9 1295.5,418.6 1306.5,414.3 1317.5,411.9 1327.5,425.6 1338.5,436.9 1348.5,435.2 1359.5,438.1" fill="none" stroke="#ffffff" stroke-width="1"/>
<rect x="72" y="83" width="3" height="3" fill="#ff00ff"/>
<rect x="157" y="83" width="3" height="3" fill="#ff00ff"/>
<rect x="242" y="83" width="3" height="3" fill="#ff00ff"/>
<rect x="317" y="83" width="3" height="3" fill="#ff00ff"/>
<rect x="359" y="83" width="3" height="3" fill="#ff00ff"/>
<rect x="412" y="83" width="3" height="3" fill="#ff00ff"/>
<rect x="455" y="83" width="3" height="3" fill="#ff00ff"/>
<rect x="476" y="83" width="3" height="3" fill="#ff00ff"/>
<rect x="486" y="83" width="3" height="3" fill="#ff00ff"/>
<rect x="508" y="83" width="3" height="3" fill="#ff00ff"/>
<rect x="678" y="83" width="3" height="3" fill="#ff00ff"/>
<rect x="688" y="83" width="3" height="3" fill="#ff00ff"/>
<rect x="911" y="83" width="3" height="3" fill="#ff00ff"/>
<rect x="996" y="83" width="3" height="3" fill="#ff00ff"/>
<rect x="1092" y="83" width="3" height="3" fill="#ff00ff"/>
<rect x="1155" y="83" width="3" height="3" fill="#ff00ff"/>
<rect x="1198" y="83" width="3" height="3" fill="#ff00ff"/>
<rect x="1219" y="83" width="3" height="3" fill="#ff00ff"/>
<rect x="-3" y="736" width="7" height="22" fill="#54ffff"/>
<rect x="8.5" y="720.5" width="6" height="37" fill="none" stroke="#ff3232" stroke-width="1"/>
<rect x="18.5" y="710.5" width="6" height="47" fill="none" stroke="#ff3232" stroke-width="1"/>
<rect x="29.5" y="622.5" width="6" height="135" fill="none" stroke="#ff3232" stroke-width="1"/>
<rect x="40" y="608" width="7" height="150" fill="#54ffff"/>
<rect x="50" y="668" width="7" height="90" fill="#54ffff"/>
<rect x="61.5" y="676.5" width="6" height="81" fill="none" stroke="#ff3232" stroke-width="1"/>
<rect x="71" y="698" width="7" height="60" fill="#54ffff"/>
<rect x="82" y="711" width="7" height="47" fill="#54ffff"/>
<rect x="93" y="728" width="7" height="30" fill="#54ffff"/>
<rect x="103" y="729" width="7" height="29" fill="#54ffff"/>
<rect x="114" y="731" width="7" height="27" fill="#54ffff"/>
<rect x="125.5" y="732.5" width="6" height="25" fill="none" stroke="#ff3232" stroke-width="1"/>
<rect x="135" y="728" width="7" height="30" fill="#54ffff"/>
<rect x="146.5" y="736.5" width="6" height="21" fill="none" stroke="#ff3232" stroke-width="1"/>
<rect x="156.5" y="732.5" width="6" height="25" fill="none" stroke="#ff3232" stroke-width="1"/>
<rect x="167" y="736" width="7" height="22" fill="#54ffff"/>
<rect x="178" y="732" width="7" height="26" fill="#54ffff"/>
<rect x="188" y="743" width="7" height="15" fill="#54ffff"/>
<rect x="199.5" y="736.5" width="6" height="21" fill="none" stroke="#ff3232" stroke-width="1"/>
<rect x="209.5" y="700.5" width="6" height="57" fill="none" stroke="#ff3232" stroke-width="1"/>
<rect x="220.5" y="723.5" width="6" height="34" fill="none" stroke="#ff3232" stroke-width="1"/>
<rect x="231.5" y="676.5" width="6" height="81" fill="none" stroke="#ff3232" stroke-width="1"/>
<rect x="241" y="670" width="7" height="88" fill="#54ffff"/>
<rect x="252.5" y="708.5" width="6" height="49" fill="none" stroke="#ff3232" stroke-width="1"/>
<rect x="263" y="722" width="7" height="36" fill="#54ffff"/>
<rect x="273.5" y="732.5" width="6" height="25" fill="none" stroke="#ff3232" stroke-width="1"/>
<rect x="284" y="733" width="7" height="25" fill="#54ffff"/>
<rect x="294.5" y="729.5" width="6" height="28" fill="none" stroke="#ff3232" stroke-width="1"/>
<rect x="305.5" y="730.5" width="6" height="27" fill="none" stroke="#ff3232" stroke-width="1"/>
<rect x="316" y="733" width="7" height="25" fill="#54ffff"/>
<rect x="326.5" y="722.5" width="6" height="35" fill="none" stroke="#ff3232" stroke-width="1"/>
<rect x="337.5" y="718.5" width="6" height="39" fill="none" stroke="#ff3232" stroke-width="1"/>
<rect x="347.5" y="704.5" width="6" height="53" fill="none" stroke="#ff3232" stroke-width="1"/>
<rect x="358" y="710" width="7" height="48" fill="#54ffff"/>
<rect x="369.5" y="715.5" width="6" height="42" fill="none" stroke="#ff3232" stroke-width="1"/>
<rect x="379" y="722" width="7" height="36" fill="#54ffff"/>
<rect x="390" y="729" width="7" height="29" fill="#54ffff"/>
<rect x="401" y="729" width="7" height="29" fill="#54ffff"/>
<rect x="411" y="715" width="7" height="43" fill="#54ffff"/>
<rect x="422.5" y="732.5" width="6" height="25" fill="none" stroke="#ff3232" stroke-width="1"/>
<rect x="432.5" y="725.5" width="6" height="32" fill="none" stroke="#ff3232" stroke-width="1"/>
<rect x="443.5" y="702.5" width="6" height="55" fill="none" stroke="#ff3232" stroke-width="1"/>
<rect x="454" y="716" width="7" height="42" fill="#54ffff"/>
<rect x="464" y="720" width="7" height="38" fill="#54ffff"/>
<rect x="475" y="732" width="7" height="26" fill="#54ffff"/>
<rect x="485" y="726" width="7" height="32" fill="#54ffff"/>
<rect x="496" y="732" width="7" height="26" fill="#54ffff"/>
<rect x="507" y="722" width="7" height="36" fill="#54ffff"/>
<rect x="517" y="732" width="7" height="26" fill="#54ffff"/>
<rect x="528.5" y="736.5" width="6" height="21" fill="none" stroke="#ff3232" stroke-width="1"/>
<rect x="539" y="735" width="7" height="23" fill="#54ffff"/>
<rect x="549.5" y="732.5" width="6" height="25" fill="none" stroke="#ff3232" stroke-width="1"/>
<rect x="560" y="736" width="7" height="22" fill="#54ffff"/>
<rect x="570" y="740" width="7" height="18" fill="#54ffff"/>
<rect x="581.5" y="737.5" width="6" height="20" fill="none" stroke="#ff3232" stroke-width="1"/>
<rect x="592" y="738" width="7" height="20" fill="#54ffff"/>
<rect x="602" y="741" width="7" height="17" fill="#54ffff"/>
<rect x="613" y="744" width="7" height="14" fill="#54ffff"/>
<rect x="623" y="744" width="7" height="14" fill="#54ffff"/>
<rect x="634" y="742" width="7" height="16" fill="#54ffff"/>
<rect x="645" y="734" width="7" height="24" fill="#54ffff"/>
<rect x="655" y="735" width="7" height="23" fill="#54ffff"/>
<rect x="666.5" y="744.5" width="6" height="13" fill="none" stroke="#ff3232" stroke-width="1"/>
<rect x="677.5" y="738.5" width="6" height="19" fill="none" stroke="#ff3232" stroke-width="1"/>
<rect x="687" y="730" width="7" height="28" fill="#54ffff"/>
<rect x="698" y="731" width="7" height="27" fill="#54ffff"/>
<rect x="708" y="740" width="7" height="18" fill="#54ffff"/>
<rect x="719.5" y="743.5" width="6" height="14" fill="none" stroke="#ff3232" stroke-width="1"/>
<rect x="730" y="746" width="7" height="12" fill="#54ffff"/>
<rect x="740.5" y="744.5" width="6" height="13" fill="none" stroke="#ff3232" stroke-width="1"/>
<rect x="751.5" y="747.5" width="6" height="10" fill="none" stroke="#ff3232" stroke-width="1"/>
<rect x="762.5" y="746.5" width="6" height="11" fill="none" stroke="#ff3232" stroke-width="1"/>
<rect x="772" y="743" width="7" height="15" fill="#54ffff"/>
<rect x="783.5" y="740.5" width="6" height="17" fill="none" stroke="#ff3232" stroke-width="1"/>
<rect x="793.5" y="743.5" width="6" height="14" fill="none" stroke="#ff3232" stroke-width="1"/>
<rect x="804" y="741" width="7" height="17" fill="#54ffff"/>
<rect x="815" y="744" width="7" height="14" fill="#54ffff"/>
<rect x="825" y="741" width="7" height="17" fill="#54ffff"/>
<rect x="836" y="746" width="7" height="12" fill="#54ffff"/>
<rect x="846" y="747" width="7" height="11" fill="#54ffff"/>
<rect x="857" y="739" width="7" height="19" fill="#54ffff"/>
<rect x="868" y="737" width="7" height="21" fill="#54ffff"/>
<rect x="878.5" y="740.5" width="6" height="17" fill="none" stroke="#ff3232" stroke-width="1"/>
<rect x="889.5" y="742.5" width="6" height="15" fill="none" stroke="#ff3232" stroke-width="1"/>
<rect x="900" y="744" width="7" height="14" fill="#54ffff"/>
<rect x="910" y="748" width="7" height="10" fill="#54ffff"/>
<rect x="921.5" y="729.5" width="6" height="28" fill="none" stroke="#ff3232" stroke-width="1"/>
<rect x="931" y="730" width="7" height="28" fill="#54ffff"/>
<rect x="942.5" y="742.5" width="6" height="15" fill="none" stroke="#ff3232" stroke-width="1"/>
<rect x="953.5" y="744.5" width="6" height="13" fill="none" stroke="#ff3232" stroke-width="1"/>
<rect x="963" y="747" width="7" height="11" fill="#54ffff"/>
<rect x="974.5" y="746.5" width="6" height="11" fill="none" stroke="#ff3232" stroke-width="1"/>
<rect x="984" y="748" width="7" height="10" fill="#54ffff"/>
<rect x="995" y="747" width="7" height="11" fill="#54ffff"/>
<rect x="1006" y="749" width="7" height="9" fill="#54ffff"/>
<rect x="1016" y="750" width="7" height="8" fill="#54ffff"/>
<rect x="1027" y="750" width="7" height="8" fill="#54ffff"/>
<rect x="1038" y="748" width="7" height="10" fill="#54ffff"/>
<rect x="1048.5" y="748.5" width="6" height="9" fill="none" stroke="#ff3232" stroke-width="1"/>
<rect x="1059" y="748" width="7" height="10" fill="#54ffff"/>
<rect x="1069" y="746" width="7" height="12" fill="#54ffff"/>
<rect x="1080" y="746" width="7" height="12" fill="#54ffff"/>
<rect x="1091" y="748" width="7" height="10" fill="#54ffff"/>
<rect x="1101" y="738" width="7" height="20" fill="#54ffff"/>
<rect x="1112.5" y="748.5" width="6" height="9" fill="none" stroke="#ff3232" stroke-width="1"/>
<rect x="1122" y="746" width="7" height="12" fill="#54ffff"/>
<rect x="1133" y="746" width="7" height="12" fill="#54ffff"/>
<rect x="1144.5" y="750.5" width="6" height="7" fill="none" stroke="#ff3232" stroke-width="1"/>
<rect x="1154.5" y="752.5" width="6" height="5" fill="none" stroke="#ff3232" stroke-width="1"/>
<rect x="1165.5" y="744.5" width="6" height="13" fill="none" stroke="#ff3232" stroke-width="1"/>
<rect x="1176" y="750" width="7" height="8" fill="#54ffff"/>
<rect x="1186" y="748" width="7" height="10" fill="#54ffff"/>
<rect x="1197" y="748" width="7" height="10" fill="#54ffff"/>
<rect x="1207.5" y="744.5" width="6" height="13" fill="none" stroke="#ff3232" stroke-width="1"/>
<rect x="1218.5" y="726.5" width="6" height="31" fill="none" stroke="#ff3232" stroke-width="1"/>
<rect x="1229" y="739" width="7" height="19" fill="#54ffff"/>
<rect x="1239.5" y="726.5" width="6" height="31" fill="none" stroke="#ff3232" stroke-width="1"/>
<rect x="1250.5" y="690.5" width="6" height="67" fill="none" stroke="#ff3232" stroke-width="1"/>
<rect x="1260" y="707" width="7" height="51" fill="#54ffff"/>
<rect x="1271.5" y="668.5" width="6" height="89" fill="none" stroke="#ff3232" stroke-width="1"/>
<rect x="1282" y="697" width="7" height="61" fill="#54ffff"/>
<rect x="1292" y="700" width="7" height="58" fill="#54ffff"/>
<rect x="1303.5" y="709.5" width="6" height="48" fill="none" stroke="#ff3232" stroke-width="1"/>
<rect x="1314" y="705" width="7" height="53" fill="#54ffff"/>
<rect x="1324.5" y="722.5" width="6" height="35" fill="none" stroke="#ff3232" stroke-width="1"/>
<rect x="1335" y="727" width="7" height="31" fill="#54ffff"/>
<rect x="1345.5" y="728.5" width="6" height="29" fill="none" stroke="#ff3232" stroke-width="1"/>
<rect x="1356.5" y="728.5" width="6" height="29" fill="none" stroke="#ff3232" stroke-width="1"/>
<polyline points="0.5,724.0 11.5,722.2 21.5,719.8 32.5,707.8 43.5,694.0 53.5,688.5 64.5,684.8 74.5,683.5 85.5,686.0 96.5,687.7 106.5,687.0 117.5,688.1 128.5,690.3 138.5,701.0 149.5,713.7 159.5,720.1 170.5,726.1 181.5,729.5 191.5,732.7 202.5,733.5 212.5,730.6 223.5,729.8 234.5,724.2 244.5,718.5 255.5,715.7 266.5,714.7 276.5,714.3 287.5,714.4 297.5,713.0 308.5,712.5 319.5,715.8 329.5,715.7 340.5,719.9 350.5,723.3 361.5,723.6 372.5,722.9 382.5,721.9 393.5,721.5 404.5,721.5 414.5,720.0 425.5,719.8 435.5,720.0 446.5,718.4 457.5,719.6 467.5,720.6 478.5,722.3 488.5,722.7 499.5,723.0 510.5,722.2 520.5,723.9 531.5,724.3 542.5,725.3 552.5,728.2 563.5,730.2 573.5,732.1 584.5,732.7 595.5,733.9 605.5,734.8 616.5,737.0 626.5,738.2 637.5,738.9 648.5,738.8 658.5,739.2 669.5,740.0 680.5,739.9 690.5,739.1 701.5,738.4 711.5,738.3 722.5,738.2 733.5,738.4 743.5,738.6 754.5,739.9 765.5,741.0 775.5,740.9 786.5,741.0 796.5,742.2 807.5,743.3 818.5,743.7 828.5,743.5 839.5,743.5 849.5,743.8 860.5,743.0 871.5,742.1 881.5,741.8 892.5,742.0 903.5,742.1 913.5,742.8 924.5,741.3 934.5,740.1 945.5,739.8 956.5,739.5 966.5,740.3 977.5,741.2 987.5,742.0 998.5,742.6 1009.5,743.1 1019.5,743.3 1030.5,745.4 1041.5,747.2 1051.5,747.7 1062.5,748.1 1072.5,748.0 1083.5,748.0 1094.5,748.0 1104.5,747.1 1115.5,747.0 1125.5,746.6 1136.5,746.2 1147.5,746.4 1157.5,746.9 1168.5,746.4 1179.5,746.8 1189.5,747.0 1200.5,747.0 1210.5,747.7 1221.5,745.6 1232.5,744.9 1242.5,742.9 1253.5,737.0 1263.5,732.4 1274.5,724.8 1285.5,719.5 1295.5,714.7 1306.5,710.8 1317.5,706.8 1327.5,706.4 1338.5,705.2 1348.5,705.3 1359.5,709.0" fill="none" stroke="#ffff00" stroke-width="1"/>
<polyline points="0.5,713.5 11.5,713.5 21.5,710.2 32.5,699.8 43.5,679.1 53.5,665.5 64.5,656.9 74.5,654.4 85.5,672.3 96.5,696.3 106.5,708.5 117.5,719.4 128.5,726.2 138.5,729.6 149.5,731.1 159.5,731.8 170.5,732.8 181.5,732.8 191.5,735.8 202.5,735.8 212.5,729.5 223.5,726.9 234.5,715.7 244.5,701.1 255.5,695.5 266.5,699.9 276.5,701.8 287.5,713.1 297.5,724.9 308.5,729.5 319.5,731.6 329.5,729.6 340.5,726.7 350.5,721.8 361.5,717.7 372.5,714.1 382.5,714.1 393.5,716.2 404.5,721.1 414.5,722.2 425.5,725.5 435.5,725.9 446.5,720.6 457.5,718.0 467.5,719.1 478.5,719.2 488.5,719.5 499.5,725.4 510.5,726.4 520.5,728.7 531.5,729.4 542.5,731.2 552.5,731.1 563.5,734.0 573.5,735.6 584.5,736.0 595.5,736.5 605.5,738.5 616.5,740.0 626.5,740.9 637.5,741.9 648.5,741.1 658.5,740.0 669.5,740.0 680.5,738.9 690.5,736.4 701.5,735.8 711.5,736.7 722.5,736.5 733.5,738.0 743.5,740.8 754.5,744.0 765.5,745.2 775.5,745.2 786.5,743.9 796.5,743.7 807.5,742.5 818.5,742.1 828.5,741.8 839.5,743.1 849.5,743.9 860.5,743.5 871.5,742.0 881.5,741.9 892.5,741.0 903.5,740.2 913.5,742.0 924.5,740.5 934.5,738.5 945.5,738.6 956.5,738.8 966.5,738.6 977.5,742.0 987.5,745.6 998.5,746.5 1009.5,747.5 1019.5,748.0 1030.5,748.8 1041.5,748.8 1051.5,748.9 1062.5,748.8 1072.5,748.0 1083.5,747.2 1094.5,747.3 1104.5,745.4 1115.5,745.2 1125.5,745.2 1136.5,745.2 1147.5,745.5 1157.5,748.4 1168.5,747.6 1179.5,748.4 1189.5,748.9 1200.5,748.5 1210.5,747.0 1221.5,743.5 1232.5,741.4 1242.5,737.0 1253.5,725.4 1263.5,717.9 1274.5,706.1 1285.5,697.7 1295.5,692.4 1306.5,696.1 1317.5,695.8 1327.5,706.8 1338.5,712.8 1348.5,718.2 1359.5,721.9" fill="none" stroke="#ffffff" stroke-width="1"/>
<rect x="0" y="845" width="1" height="13" fill="#ff3232"/>
<rect x="11" y="841" width="1" height="17" fill="#ff3232"/>
<rect x="21" y="838" width="1" height="20" fill="#ff3232"/>
<rect x="32" y="806" width="1" height="52" fill="#ff3232"/>
<rect x="43" y="802" width="1" height="56" fill="#ff3232"/>
<rect x="53" y="810" width="1" height="48" fill="#ff3232"/>
<rect x="64" y="804" width="1" height="54" fill="#ff3232"/>
<rect x="74" y="814" width="1" height="44" fill="#ff3232"/>
<rect x="85" y="835" width="1" height="23" fill="#ff3232"/>
<rect x="96" y="848" width="1" height="10" fill="#ff3232"/>
<rect x="117" y="858" width="1" height="13" fill="#54ffff"/>
<rect x="128" y="858" width="1" height="21" fill="#54ffff"/>
<rect x="138" y="858" width="1" height="31" fill="#54ffff"/>
<rect x="149" y="858" width="1" height="34" fill="#54ffff"/>
<rect x="159" y="858" width="1" height="32" fill="#54ffff"/>
<rect x="170" y="858" width="1" height="31" fill="#54ffff"/>
<rect x="181" y="858" width="1" height="34" fill="#54ffff"/>
<rect x="191" y="858" width="1" height="34" fill="#54ffff"/>
<rect x="202" y="858" width="1" height="29" fill="#54ffff"/>
<rect x="212" y="858" width="1" height="14" fill="#54ffff"/>
<rect x="223" y="858" width="1" height="3" fill="#54ffff"/>
<rect x="234" y="840" width="1" height="18" fill="#ff3232"/>
<rect x="244" y="838" width="1" height="20" fill="#ff3232"/>
<rect x="255" y="840" width="1" height="18" fill="#ff3232"/>
<rect x="266" y="850" width="1" height="8" fill="#ff3232"/>
<rect x="276" y="856" width="1" height="2" fill="#ff3232"/>
<rect x="287" y="858" width="1" height="4" fill="#54ffff"/>
<rect x="297" y="858" width="1" height="6" fill="#54ffff"/>
<rect x="308" y="858" width="1" height="4" fill="#54ffff"/>
<rect x="319" y="858" width="1" height="8" fill="#54ffff"/>
<rect x="329" y="858" width="1" height="2" fill="#54ffff"/>
<rect x="340" y="855" width="1" height="3" fill="#ff3232"/>
<rect x="350" y="847" width="1" height="11" fill="#ff3232"/>
<rect x="361" y="853" width="1" height="5" fill="#ff3232"/>
<rect x="372" y="848" width="1" height="10" fill="#ff3232"/>
<rect x="382" y="848" width="1" height="10" fill="#ff3232"/>
<rect x="393" y="851" width="1" height="7" fill="#ff3232"/>
<rect x="404" y="855" width="1" height="3" fill="#ff3232"/>
<rect x="414" y="858" width="1" height="11" fill="#54ffff"/>
<rect x="425" y="858" width="1" height="19" fill="#54ffff"/>
<rect x="435" y="858" width="1" height="14" fill="#54ffff"/>
<rect x="446" y="858" width="1" height="4" fill="#54ffff"/>
<rect x="457" y="858" width="1" height="2" fill="#54ffff"/>
<rect x="467" y="858" width="1" height="6" fill="#54ffff"/>
<rect x="478" y="858" width="1" height="9" fill="#54ffff"/>
<rect x="488" y="858" width="1" height="11" fill="#54ffff"/>
<rect x="499" y="858" width="1" height="14" fill="#54ffff"/>
<rect x="510" y="858" width="1" height="25" fill="#54ffff"/>
<rect x="520" y="858" width="1" height="30" fill="#54ffff"/>
<rect x="531" y="858" width="1" height="30" fill="#54ffff"/>
<rect x="542" y="858" width="1" height="32" fill="#54ffff"/>
<rect x="552" y="858" width="1" height="28" fill="#54ffff"/>
<rect x="563" y="858" width="1" height="32" fill="#54ffff"/>
<rect x="573" y="858" width="1" height="34" fill="#54ffff"/>
<rect x="584" y="858" width="1" height="25" fill="#54ffff"/>
<rect x="595" y="858" width="1" height="17" fill="#54ffff"/>
<rect x="605" y="858" width="1" height="16" fill="#54ffff"/>
<rect x="616" y="858" width="1" height="16" fill="#54ffff"/>
<rect x="626" y="858" width="1" height="13" fill="#54ffff"/>
<rect x="637" y="858" width="1" height="12" fill="#54ffff"/>
<rect x="648" y="858" width="1" height="15" fill="#54ffff"/>
<rect x="658" y="858" width="1" height="19" fill="#54ffff"/>
<rect x="669" y="858" width="1" height="20" fill="#54ffff"/>
<rect x="680" y="858" width="1" height="18" fill="#54ffff"/>
<rect x="690" y="858" width="1" height="24" fill="#54ffff"/>
<rect x="701" y="858" width="1" height="33" fill="#54ffff"/>
<rect x="711" y="858" width="1" height="38" fill="#54ffff"/>
<rect x="722" y="858" width="1" height="36" fill="#54ffff"/>
<rect x="733" y="858" width="1" height="36" fill="#54ffff"/>
<rect x="743" y="858" width="1" height="31" fill="#54ffff"/>
<rect x="754" y="858" width="1" height="25" fill="#54ffff"/>
<rect x="765" y="858" width="1" height="16" fill="#54ffff"/>
<rect x="775" y="858" width="1" height="4" fill="#54ffff"/>
<rect x="786" y="854" width="1" height="4" fill="#ff3232"/>
<rect x="796" y="846" width="1" height="12" fill="#ff3232"/>
<rect x="807" y="842" width="1" height="16" fill="#ff3232"/>
<rect x="818" y="841" width="1" height="17" fill="#ff3232"/>
<rect x="828" y="844" width="1" height="14" fill="#ff3232"/>
<rect x="839" y="848" width="1" height="10" fill="#ff3232"/>
<rect x="849" y="848" width="1" height="10" fill="#ff3232"/>
<rect x="860" y="844" width="1" height="14" fill="#ff3232"/>
<rect x="871" y="844" width="1" height="14" fill="#ff3232"/>
<rect x="881" y="842" width="1" height="16" fill="#ff3232"/>
<rect x="892" y="840" width="1" height="18" fill="#ff3232"/>
<rect x="903" y="841" width="1" height="17" fill="#ff3232"/>
<rect x="913" y="844" width="1" height="14" fill="#ff3232"/>
<rect x="924" y="839" width="1" height="19" fill="#ff3232"/>
<rect x="934" y="839" width="1" height="19" fill="#ff3232"/>
<rect x="945" y="840" width="1" height="18" fill="#ff3232"/>
<rect x="956" y="840" width="1" height="18" fill="#ff3232"/>
<rect x="966" y="843" width="1" height="15" fill="#ff3232"/>
<rect x="977" y="844" width="1" height="14" fill="#ff3232"/>
<rect x="987" y="847" width="1" height="11" fill="#ff3232"/>
<rect x="998" y="851" width="1" height="7" fill="#ff3232"/>
<rect x="1009" y="854" width="1" height="4" fill="#ff3232"/>
<rect x="1019" y="855" width="1" height="3" fill="#ff3232"/>
<rect x="1030" y="857" width="1" height="1" fill="#ff3232"/>
<rect x="1041" y="857" width="1" height="1" fill="#ff3232"/>
<rect x="1072" y="858" width="1" height="6" fill="#54ffff"/>
<rect x="1083" y="858" width="1" height="13" fill="#54ffff"/>
<rect x="1094" y="858" width="1" height="20" fill="#54ffff"/>
<rect x="1104" y="858" width="1" height="29" fill="#54ffff"/>
<rect x="1115" y="858" width="1" height="28" fill="#54ffff"/>
<rect x="1125" y="858" width="1" height="26" fill="#54ffff"/>
<rect x="1136" y="858" width="1" height="24" fill="#54ffff"/>
<rect x="1147" y="858" width="1" height="23" fill="#54ffff"/>
<rect x="1157" y="858" width="1" height="18" fill="#54ffff"/>
<rect x="1168" y="858" width="1" height="10" fill="#54ffff"/>
<rect x="1179" y="858" width="1" height="4" fill="#54ffff"/>
<rect x="1189" y="858" width="1" height="2" fill="#54ffff"/>
<rect x="1200" y="858" width="1" height="4" fill="#54ffff"/>
<rect x="1210" y="856" width="1" height="2" fill="#ff3232"/>
<rect x="1221" y="844" width="1" height="14" fill="#ff3232"/>
<rect x="1232" y="841" width="1" height="17" fill="#ff3232"/>
<rect x="1242" y="830" width="1" height="28" fill="#ff3232"/>
<rect x="1253" y="810" width="1" height="48" fill="#ff3232"/>
<rect x="1263" y="804" width="1" height="54" fill="#ff3232"/>
<rect x="1274" y="783" width="1" height="75" fill="#ff3232"/>
<rect x="1285" y="783" width="1" height="75" fill="#ff3232"/>
<rect x="1295" y="792" width="1" height="66" fill="#ff3232"/>
<rect x="1306" y="796" width="1" height="62" fill="#ff3232"/>
<rect x="1317" y="809" width="1" height="49" fill="#ff3232"/>
<rect x="1327" y="820" width="1" height="38" fill="#ff3232"/>
<rect x="1338" y="836" width="1" height="22" fill="#ff3232"/>
<rect x="1348" y="838" width="1" height="20" fill="#ff3232"/>
<rect x="1359" y="839" width="1" height="19" fill="#ff3232"/>
<polyline points="0.5,848.0 11.5,845.2 21.5,842.5 32.5,838.0 43.5,831.2 53.5,823.8 64.5,817.5 74.5,811.2 85.5,808.2 96.5,807.0 106.5,807.5 117.5,808.8 128.5,811.8 138.5,815.5 149.5,819.5 159.5,824.5 170.5,827.5 181.5,832.0 191.5,836.2 202.5,840.0 212.5,842.0 223.5,842.0 234.5,840.5 244.5,837.5 255.5,835.0 266.5,834.2 276.5,834.2 287.5,834.5 297.5,835.5 308.5,836.2 319.5,837.5 329.5,837.5 340.5,837.0 350.5,835.5 361.5,835.0 372.5,833.8 382.5,832.5 393.5,831.5 404.5,831.5 414.5,833.0 425.5,835.0 435.5,836.2 446.5,837.5 457.5,838.0 467.5,839.0 478.5,840.0 488.5,841.2 499.5,842.0 510.5,845.8 520.5,849.5 531.5,853.8 542.5,857.5 552.5,861.2 563.5,865.5 573.5,870.0 584.5,872.5 595.5,875.5 605.5,877.0 616.5,879.2 626.5,880.8 637.5,882.5 648.5,884.2 658.5,886.2 669.5,889.2 680.5,891.2 690.5,894.2 701.5,898.2 711.5,903.0 722.5,908.2 733.5,912.0 743.5,916.2 754.5,919.2 765.5,921.2 775.5,922.5 786.5,921.8 796.5,919.5 807.5,917.5 818.5,915.5 828.5,913.2 839.5,911.8 849.5,910.0 860.5,908.8 871.5,907.5 881.5,904.5 892.5,902.5 903.5,900.5 913.5,898.2 924.5,896.2 934.5,894.2 945.5,892.0 956.5,890.0 966.5,888.0 977.5,886.2 987.5,884.2 998.5,883.2 1009.5,883.0 1019.5,882.5 1030.5,882.5 1041.5,882.5 1051.5,882.5 1062.5,882.5 1072.5,883.8 1083.5,885.8 1094.5,887.5 1104.5,892.0 1115.5,895.8 1125.5,898.8 1136.5,901.8 1147.5,904.5 1157.5,906.8 1168.5,908.0 1179.5,908.8 1189.5,908.8 1200.5,909.5 1210.5,909.2 1221.5,907.5 1232.5,905.5 1242.5,901.2 1253.5,896.2 1263.5,888.8 1274.5,880.0 1285.5,871.2 1295.5,862.5 1306.5,853.8 1317.5,847.5 1327.5,842.5 1338.5,839.2 1348.5,836.8 1359.5,834.5" fill="none" stroke="#ffff00" stroke-width="1"/>
<polyline points="0.5,841.8 11.5,837.5 21.5,833.8 32.5,809.5 43.5,801.2 53.5,799.2 64.5,789.5 74.5,789.5 85.5,796.2 96.5,801.8 106.5,807.5 117.5,815.5 128.5,823.2 138.5,832.0 149.5,837.0 159.5,840.0 170.5,843.0 181.5,848.8 191.5,854.5 202.5,855.5 212.5,850.5 223.5,845.0 234.5,832.0 244.5,827.5 255.5,826.2 266.5,830.0 276.5,832.0 287.5,835.8 297.5,839.5 308.5,840.0 319.5,841.8 329.5,840.0 340.5,835.8 350.5,830.8 361.5,832.0 372.5,828.2 382.5,827.5 393.5,827.5 404.5,828.8 414.5,838.8 425.5,844.5 435.5,844.5 446.5,840.5 457.5,839.5 467.5,841.8 478.5,843.8 488.5,846.2 499.5,850.0 510.5,857.5 520.5,865.0 531.5,868.0 542.5,873.2 552.5,875.0 563.5,882.5 573.5,886.8 584.5,885.5 595.5,884.2 605.5,885.5 616.5,887.0 626.5,887.0 637.5,888.2 648.5,891.2 658.5,896.2 669.5,899.5 680.5,901.2 690.5,907.5 701.5,916.2 711.5,922.5 722.5,926.2 733.5,931.0 743.5,935.0 754.5,933.0 765.5,929.5 775.5,923.8 786.5,918.2 796.5,913.8 807.5,910.0 818.5,907.5 828.5,906.2 839.5,907.5 849.5,906.8 860.5,903.0 871.5,900.5 881.5,897.0 892.5,894.5 903.5,892.5 913.5,892.5 924.5,887.5 934.5,885.5 945.5,883.2 956.5,880.8 966.5,880.5 977.5,879.2 987.5,878.2 998.5,880.5 1009.5,880.8 1019.5,880.8 1030.5,881.8 1041.5,881.8 1051.5,882.5 1062.5,883.2 1072.5,887.5 1083.5,892.0 1094.5,897.5 1104.5,907.0 1115.5,909.5 1125.5,911.8 1136.5,914.5 1147.5,915.8 1157.5,916.2 1168.5,912.5 1179.5,910.5 1189.5,910.0 1200.5,911.2 1210.5,906.8 1221.5,900.0 1232.5,895.8 1242.5,887.5 1253.5,872.5 1263.5,860.0 1274.5,840.0 1285.5,831.8 1295.5,828.0 1306.5,822.5 1317.5,822.5 1327.5,823.8 1338.5,828.2 1348.5,825.5 1359.5,824.5" fill="none" stroke="#ffffff" stroke-width="1"/>
</svg>
<span class="t" style="left:-13.5px;top:62.5px;font-size:12px;color:#c8c8c8;">科隆新材 (日线)</span>
<span class="t" style="left:75px;top:62.5px;font-size:12px;color:#ff3c3c;">模拟</span>
<svg class="b" style="left:102px;top:66px" width="13" height="13" viewBox="0 0 13 13"><circle cx="6.5" cy="6.5" r="6" fill="#6e6e6e"/><path d="M3.5,5.2L6.5,8.2L9.5,5.2" stroke="#ddd" stroke-width="1.2" fill="none"/></svg>
<span class="t" style="left:119.5px;top:62.5px;font-size:12.5px;color:#f0f0f0;">MA5: 30.40</span>
<span class="t" style="left:190px;top:62.5px;font-size:12.5px;color:#f4f400;">MA10: 30.81</span>
<span class="t" style="left:266.5px;top:62.5px;font-size:12.5px;color:#ff00ff;">MA20: 29.21</span>
<span class="t" style="left:343.5px;top:62.5px;font-size:12.5px;color:#00f000;">MA60: 29.40</span>
<svg class="b" style="left:1362px;top:66px" width="34" height="15" viewBox="0 0 34 15"><path d="M7.5,2.3L12.7,7.5L7.5,12.7L2.3,7.5Z" stroke="#9a9a9a" stroke-width="1" fill="none"/><rect x="20.5" y="2.5" width="11" height="10" rx="2" fill="none" stroke="#a8a8a8" stroke-width="1"/><rect x="27" y="4" width="3" height="7" fill="#a8a8a8"/></svg>
<span class="t" style="left:57px;top:82.5px;font-size:12.5px;color:#c0c0c0;">42.49</span>
<svg class="b" style="left:42px;top:84px" width="14" height="10" viewBox="0 0 14 10"><path d="M1.5,2.5L12,6.5M1.5,2.5L5,1M1.5,2.5L3,6" stroke="#c0c0c0" stroke-width="1" fill="none"/></svg>
<span class="t" style="left:1213px;top:554.5px;font-size:12.5px;color:#c0c0c0;">26.07</span>
<svg class="b" style="left:1199px;top:559px" width="14" height="10" viewBox="0 0 14 10"><path d="M1,4.5H13M1,4.5L4.5,1.5M1,4.5L4.5,7.5" stroke="#c0c0c0" stroke-width="1" fill="none"/></svg>
<span class="t" style="left:906px;top:572px;width:13px;height:13px;line-height:13px;font-size:11.5px;color:#fff;background:#0a2f6a;text-align:center">财</span>
<span class="t" style="left:1141px;top:572px;width:13px;height:13px;line-height:13px;font-size:11.5px;color:#fff;background:#0a7a0a;text-align:center">减</span>
<span class="t" style="left:1225px;top:572px;width:13px;height:13px;line-height:13px;font-size:11.5px;color:#fff;background:#0a7474;text-align:center">解</span>
<span class="t" style="left:122px;top:574px;font-size:10px;line-height:12px;color:#ff0000;font-weight:bold">S</span>
<svg class="b" style="left:122px;top:574px" width="8" height="4" viewBox="0 0 8 4"><path d="M0,3.5L3.5,0L7,3.5Z" fill="#ff0000"/></svg>
<div class="b" style="left:1337px;top:580px;width:1px;height:6px;background:#ffff00"></div>
<span class="t" style="left:3px;top:584.5px;font-size:12.2px;color:#c8c8c8;">VOL-TDX(5,10)</span>
<span class="t" style="left:93px;top:584.5px;font-size:12.5px;color:#f0f0f0;">VOLUME: 19128</span>
<span class="t" style="left:192px;top:584.5px;font-size:12.5px;color:#f0f0f0;">MA5: 22596</span>
<span class="t" style="left:266.5px;top:584.5px;font-size:12.5px;color:#f4f400;">MA10: 30820</span>
<span class="t" style="left:3px;top:758.5px;font-size:12.2px;color:#c8c8c8;">MACD(12,26,9)</span>
<span class="t" style="left:94px;top:758.5px;font-size:12.5px;color:#f0f0f0;">DIF: 0.60</span>
<span class="t" style="left:149.5px;top:758.5px;font-size:12.5px;color:#f4f400;">DEA: 0.42</span>
<span class="t" style="left:209.5px;top:758.5px;font-size:12.5px;color:#ff00ff;">MACD: 0.35</span>
<div class="b" style="left:1448px;top:43px;width:1px;height:888px;background:#2e2e2e"></div>
<div class="b" style="left:1682px;top:43px;width:1px;height:888px;background:#2e2e2e"></div>
<div class="b" style="left:1449px;top:43px;width:451px;height:1px;background:#1a1c22"></div>
<span class="t" style="left:1451px;top:48px;font-size:15px;color:#1ec8f0;">科隆新材</span>
<span class="t" style="left:1514px;top:48px;font-size:13.5px;color:#ff3c3c;font-weight:bold">i</span>
<span class="t" style="left:1527px;top:48px;font-size:16px;color:#dcdcdc;">920098</span>
<span class="t" style="left:1585.5px;top:46.5px;font-size:10px;color:#ff3c3c;">L</span>
<span class="t" style="left:1595px;top:46.5px;font-size:10px;color:#ff3c3c;font-weight:bold">R</span>
<span class="t" style="left:1451px;top:72.5px;font-size:18px;color:#08d040;font-weight:bold;letter-spacing:-0.2px">29.44</span>
<span class="t" style="left:1504.5px;top:73px;font-size:14px;color:#08d040;">-0.92</span>
<span class="t" style="left:1545.5px;top:73px;font-size:14px;color:#08d040;">-3.03%</span>
<div class="b" style="left:1628px;top:48px;width:49px;height:48px;background:#2a2b2d"></div>
<span class="t" style="left:1452.5px;width:400px;text-align:center;top:49.8px;font-size:12px;color:#c8c8c8;">橡胶</span>
<span class="t" style="left:1452px;width:400px;text-align:center;top:74px;font-size:12.5px;color:#ff3c3c;">0.40%</span>
<div class="b" style="left:1449px;top:98px;width:451px;height:1px;background:#2e2e2e"></div>
<span class="t" style="left:1451px;top:97.7px;font-size:14px;color:#dcdcdc;">卖五</span>
<span class="t" style="right:335.5px;top:97.7px;font-size:14px;color:#08d040;transform:scaleY(1.07);">29.54</span>
<span class="t" style="right:219px;top:97.7px;font-size:14px;color:#d8d800;transform:scaleY(1.07);">50</span>
<span class="t" style="left:1451px;top:115.7px;font-size:14px;color:#dcdcdc;">卖四</span>
<span class="t" style="right:335.5px;top:115.7px;font-size:14px;color:#08d040;transform:scaleY(1.07);">29.50</span>
<span class="t" style="right:219px;top:115.7px;font-size:14px;color:#d8d800;transform:scaleY(1.07);">43</span>
<span class="t" style="left:1451px;top:133.7px;font-size:14px;color:#dcdcdc;">卖三</span>
<span class="t" style="right:335.5px;top:133.7px;font-size:14px;color:#08d040;transform:scaleY(1.07);">29.49</span>
<span class="t" style="right:219px;top:133.7px;font-size:14px;color:#d8d800;transform:scaleY(1.07);">8</span>
<span class="t" style="left:1451px;top:151.7px;font-size:14px;color:#dcdcdc;">卖二</span>
<span class="t" style="right:335.5px;top:151.7px;font-size:14px;color:#08d040;transform:scaleY(1.07);">29.45</span>
<span class="t" style="right:219px;top:151.7px;font-size:14px;color:#d8d800;transform:scaleY(1.07);">70</span>
<span class="t" style="left:1451px;top:169.7px;font-size:14px;color:#dcdcdc;">卖一</span>
<span class="t" style="right:335.5px;top:169.7px;font-size:14px;color:#08d040;transform:scaleY(1.07);">29.44</span>
<span class="t" style="right:219px;top:169.7px;font-size:14px;color:#d8d800;transform:scaleY(1.07);">8</span>
<div class="b" style="left:1449px;top:189px;width:86px;height:1px;background:#d89020"></div>
<div class="b" style="left:1535px;top:189px;width:147px;height:1px;background:#3a78d8"></div>
<span class="t" style="left:1451px;top:189.7px;font-size:14px;color:#dcdcdc;">买一</span>
<span class="t" style="right:335.5px;top:189.7px;font-size:14px;color:#08d040;transform:scaleY(1.07);">29.41</span>
<span class="t" style="right:219px;top:189.7px;font-size:14px;color:#d8d800;transform:scaleY(1.07);">12</span>
<span class="t" style="left:1451px;top:207.7px;font-size:14px;color:#dcdcdc;">买二</span>
<span class="t" style="right:335.5px;top:207.7px;font-size:14px;color:#08d040;transform:scaleY(1.07);">29.40</span>
<span class="t" style="right:219px;top:207.7px;font-size:14px;color:#d8d800;transform:scaleY(1.07);">2</span>
<span class="t" style="left:1451px;top:225.7px;font-size:14px;color:#dcdcdc;">买三</span>
<span class="t" style="right:335.5px;top:225.7px;font-size:14px;color:#08d040;transform:scaleY(1.07);">29.39</span>
<span class="t" style="right:219px;top:225.7px;font-size:14px;color:#d8d800;transform:scaleY(1.07);">44</span>
<span class="t" style="left:1451px;top:243.7px;font-size:14px;color:#dcdcdc;">买四</span>
<span class="t" style="right:335.5px;top:243.7px;font-size:14px;color:#08d040;transform:scaleY(1.07);">29.38</span>
<span class="t" style="right:219px;top:243.7px;font-size:14px;color:#d8d800;transform:scaleY(1.07);">28</span>
<span class="t" style="left:1451px;top:261.7px;font-size:14px;color:#dcdcdc;">买五</span>
<span class="t" style="right:335.5px;top:261.7px;font-size:14px;color:#08d040;transform:scaleY(1.07);">29.37</span>
<span class="t" style="right:219px;top:261.7px;font-size:14px;color:#d8d800;transform:scaleY(1.07);">22</span>
<div class="b" style="left:1449px;top:282px;width:233px;height:1px;background:#2e2e2e"></div>
<span class="t" style="left:1451px;top:282.8px;font-size:14px;color:#dcdcdc;">涨停</span>
<span class="t" style="right:335.5px;top:282.8px;font-size:14px;color:#ff3c3c;transform:scaleY(1.07);">39.46</span>
<span class="t" style="left:1568px;top:282.8px;font-size:14px;color:#dcdcdc;">跌停</span>
<span class="t" style="right:218.5px;top:282.8px;font-size:14px;color:#08d040;transform:scaleY(1.07);">21.26</span>
<span class="t" style="left:1451px;top:301.9px;font-size:14px;color:#dcdcdc;">最高</span>
<span class="t" style="right:335.5px;top:301.9px;font-size:14px;color:#08d040;transform:scaleY(1.07);">30.30</span>
<span class="t" style="left:1568px;top:301.9px;font-size:14px;color:#dcdcdc;">量比</span>
<span class="t" style="right:218.5px;top:301.9px;font-size:14px;color:#08d040;transform:scaleY(1.07);">0.59</span>
<span class="t" style="left:1451px;top:321px;font-size:14px;color:#dcdcdc;">最低</span>
<span class="t" style="right:335.5px;top:321px;font-size:14px;color:#08d040;transform:scaleY(1.07);">29.25</span>
<span class="t" style="left:1568px;top:321px;font-size:14px;color:#dcdcdc;">市值</span>
<span class="t" style="right:218.5px;top:321px;font-size:14px;color:#dcdcdc;">23.9亿</span>
<span class="t" style="left:1451px;top:340.1px;font-size:14px;color:#dcdcdc;">现量</span>
<span class="t" style="right:335.5px;top:340.1px;font-size:14px;color:#ffffff;transform:scaleY(1.07);">189</span>
<span class="t" style="left:1568px;top:340.1px;font-size:14px;color:#dcdcdc;">总量</span>
<span class="t" style="right:218.5px;top:340.1px;font-size:14px;color:#dcdcdc;transform:scaleY(1.07);">19128</span>
<span class="t" style="left:1451px;top:359.2px;font-size:14px;color:#dcdcdc;">外盘</span>
<span class="t" style="right:335.5px;top:359.2px;font-size:14px;color:#ff3c3c;transform:scaleY(1.07);">8286</span>
<span class="t" style="left:1568px;top:359.2px;font-size:14px;color:#dcdcdc;">内盘</span>
<span class="t" style="right:218.5px;top:359.2px;font-size:14px;color:#08d040;transform:scaleY(1.07);">10842</span>
<div class="b" style="left:1449px;top:378px;width:233px;height:1px;background:#2e2e2e"></div>
<span class="t" style="left:1451px;top:380px;font-size:14px;color:#dcdcdc;">换手</span>
<span class="t" style="right:335.5px;top:380px;font-size:14px;color:#dcdcdc;transform:scaleY(1.07);">3.47%</span>
<span class="t" style="left:1568px;top:380px;font-size:14px;color:#dcdcdc;">股本</span>
<span class="t" style="right:218.5px;top:380px;font-size:14px;color:#dcdcdc;">8132万</span>
<span class="t" style="left:1451px;top:399.1px;font-size:14px;color:#dcdcdc;">净资</span>
<span class="t" style="right:335.5px;top:399.1px;font-size:14px;color:#dcdcdc;transform:scaleY(1.07);">11.52</span>
<span class="t" style="left:1568px;top:399.1px;font-size:14px;color:#dcdcdc;">流通</span>
<span class="t" style="right:218.5px;top:399.1px;font-size:14px;color:#dcdcdc;">5519万</span>
<span class="t" style="left:1451px;top:418.2px;font-size:14px;color:#dcdcdc;">收益㈢</span>
<span class="t" style="right:335.5px;top:418.2px;font-size:14px;color:#dcdcdc;transform:scaleY(1.07);">0.630</span>
<span class="t" style="left:1568px;top:418.2px;font-size:14px;color:#dcdcdc;">PE(动)</span>
<span class="t" style="right:218.5px;top:418.2px;font-size:14px;color:#dcdcdc;transform:scaleY(1.07);">35.0</span>
<div class="b" style="left:1449px;top:441px;width:233px;height:1px;background:#2e2e2e"></div>
<span class="t" style="left:1450.5px;top:441.5px;font-size:14px;color:#dcdcdc;">当日可融资</span>
<span class="t" style="left:1524.5px;top:441.5px;font-size:14px;color:#dcdcdc;">当日可融券</span>
<div class="b" style="left:1449px;top:461px;width:233px;height:1px;background:#2e2e2e"></div>
<span class="t" style="left:1450.5px;top:461.5px;font-size:14px;color:#dcdcdc;transform:scaleY(1.07);">14:54</span>
<span class="t" style="right:318px;top:461.5px;font-size:14px;color:#08d040;transform:scaleY(1.07);">29.40</span>
<span class="t" style="right:241.5px;top:461.5px;font-size:14px;color:#d8d800;transform:scaleY(1.07);">2</span>
<span class="t" style="left:1474.5px;width:400px;text-align:center;top:461.5px;font-size:14px;color:#08d040;transform:scaleY(1.07);">S</span>
<span class="t" style="left:1450.5px;top:479.5px;font-size:14px;color:#dcdcdc;transform:scaleY(1.07);">14:54</span>
<span class="t" style="right:318px;top:479.5px;font-size:14px;color:#08d040;transform:scaleY(1.07);">29.40</span>
<span class="t" style="right:241.5px;top:479.5px;font-size:14px;color:#d8d800;transform:scaleY(1.07);">6</span>
<span class="t" style="left:1474.5px;width:400px;text-align:center;top:479.5px;font-size:14px;color:#ff3c3c;transform:scaleY(1.07);">B</span>
<span class="t" style="left:1450.5px;top:497.5px;font-size:14px;color:#dcdcdc;transform:scaleY(1.07);">14:54</span>
<span class="t" style="right:318px;top:497.5px;font-size:14px;color:#08d040;transform:scaleY(1.07);">29.44</span>
<span class="t" style="right:241.5px;top:497.5px;font-size:14px;color:#d8d800;transform:scaleY(1.07);">1</span>
<span class="t" style="left:1474.5px;width:400px;text-align:center;top:497.5px;font-size:14px;color:#ff3c3c;transform:scaleY(1.07);">B</span>
<span class="t" style="left:1450.5px;top:515.5px;font-size:14px;color:#dcdcdc;transform:scaleY(1.07);">14:54</span>
<span class="t" style="right:318px;top:515.5px;font-size:14px;color:#08d040;transform:scaleY(1.07);">29.41</span>
<span class="t" style="right:241.5px;top:515.5px;font-size:14px;color:#d8d800;transform:scaleY(1.07);">3</span>
<span class="t" style="left:1474.5px;width:400px;text-align:center;top:515.5px;font-size:14px;color:#08d040;transform:scaleY(1.07);">S</span>
<span class="t" style="left:1450.5px;top:533.5px;font-size:14px;color:#dcdcdc;transform:scaleY(1.07);">14:54</span>
<span class="t" style="right:318px;top:533.5px;font-size:14px;color:#08d040;transform:scaleY(1.07);">29.44</span>
<span class="t" style="right:241.5px;top:533.5px;font-size:14px;color:#d8d800;transform:scaleY(1.07);">36</span>
<span class="t" style="left:1474.5px;width:400px;text-align:center;top:533.5px;font-size:14px;color:#ff3c3c;transform:scaleY(1.07);">B</span>
<span class="t" style="left:1450.5px;top:551.5px;font-size:14px;color:#dcdcdc;transform:scaleY(1.07);">14:54</span>
<span class="t" style="right:318px;top:551.5px;font-size:14px;color:#08d040;transform:scaleY(1.07);">29.44</span>
<span class="t" style="right:241.5px;top:551.5px;font-size:14px;color:#d8d800;transform:scaleY(1.07);">1</span>
<span class="t" style="left:1474.5px;width:400px;text-align:center;top:551.5px;font-size:14px;color:#ff3c3c;transform:scaleY(1.07);">B</span>
<span class="t" style="left:1450.5px;top:569.5px;font-size:14px;color:#dcdcdc;transform:scaleY(1.07);">14:54</span>
<span class="t" style="right:318px;top:569.5px;font-size:14px;color:#08d040;transform:scaleY(1.07);">29.44</span>
<span class="t" style="right:241.5px;top:569.5px;font-size:14px;color:#d8d800;transform:scaleY(1.07);">1</span>
<span class="t" style="left:1474.5px;width:400px;text-align:center;top:569.5px;font-size:14px;color:#ff3c3c;transform:scaleY(1.07);">B</span>
<span class="t" style="left:1450.5px;top:587.5px;font-size:14px;color:#dcdcdc;transform:scaleY(1.07);">14:54</span>
<span class="t" style="right:318px;top:587.5px;font-size:14px;color:#08d040;transform:scaleY(1.07);">29.44</span>
<span class="t" style="right:241.5px;top:587.5px;font-size:14px;color:#d8d800;transform:scaleY(1.07);">1</span>
<span class="t" style="left:1474.5px;width:400px;text-align:center;top:587.5px;font-size:14px;color:#ff3c3c;transform:scaleY(1.07);">B</span>
<span class="t" style="left:1450.5px;top:605.5px;font-size:14px;color:#dcdcdc;transform:scaleY(1.07);">14:55</span>
<span class="t" style="right:318px;top:605.5px;font-size:14px;color:#08d040;transform:scaleY(1.07);">29.44</span>
<span class="t" style="right:241.5px;top:605.5px;font-size:14px;color:#d8d800;transform:scaleY(1.07);">17</span>
<span class="t" style="left:1474.5px;width:400px;text-align:center;top:605.5px;font-size:14px;color:#ff3c3c;transform:scaleY(1.07);">B</span>
<span class="t" style="left:1450.5px;top:623.5px;font-size:14px;color:#dcdcdc;transform:scaleY(1.07);">14:55</span>
<span class="t" style="right:318px;top:623.5px;font-size:14px;color:#08d040;transform:scaleY(1.07);">29.44</span>
<span class="t" style="right:241.5px;top:623.5px;font-size:14px;color:#d8d800;transform:scaleY(1.07);">4</span>
<span class="t" style="left:1474.5px;width:400px;text-align:center;top:623.5px;font-size:14px;color:#ff3c3c;transform:scaleY(1.07);">B</span>
<span class="t" style="left:1450.5px;top:641.5px;font-size:14px;color:#dcdcdc;transform:scaleY(1.07);">14:55</span>
<span class="t" style="right:318px;top:641.5px;font-size:14px;color:#08d040;transform:scaleY(1.07);">29.44</span>
<span class="t" style="right:241.5px;top:641.5px;font-size:14px;color:#d8d800;transform:scaleY(1.07);">24</span>
<span class="t" style="left:1474.5px;width:400px;text-align:center;top:641.5px;font-size:14px;color:#ff3c3c;transform:scaleY(1.07);">B</span>
<span class="t" style="left:1450.5px;top:659.5px;font-size:14px;color:#dcdcdc;transform:scaleY(1.07);">14:55</span>
<span class="t" style="right:318px;top:659.5px;font-size:14px;color:#08d040;transform:scaleY(1.07);">29.44</span>
<span class="t" style="right:241.5px;top:659.5px;font-size:14px;color:#d8d800;transform:scaleY(1.07);">4</span>
<span class="t" style="left:1474.5px;width:400px;text-align:center;top:659.5px;font-size:14px;color:#ff3c3c;transform:scaleY(1.07);">B</span>
<span class="t" style="left:1450.5px;top:677.5px;font-size:14px;color:#dcdcdc;transform:scaleY(1.07);">14:55</span>
<span class="t" style="right:318px;top:677.5px;font-size:14px;color:#08d040;transform:scaleY(1.07);">29.44</span>
<span class="t" style="right:241.5px;top:677.5px;font-size:14px;color:#d8d800;transform:scaleY(1.07);">4</span>
<span class="t" style="left:1474.5px;width:400px;text-align:center;top:677.5px;font-size:14px;color:#ff3c3c;transform:scaleY(1.07);">B</span>
<span class="t" style="left:1450.5px;top:695.5px;font-size:14px;color:#dcdcdc;transform:scaleY(1.07);">14:55</span>
<span class="t" style="right:318px;top:695.5px;font-size:14px;color:#08d040;transform:scaleY(1.07);">29.33</span>
<span class="t" style="right:241.5px;top:695.5px;font-size:14px;color:#d8d800;transform:scaleY(1.07);">91</span>
<span class="t" style="left:1474.5px;width:400px;text-align:center;top:695.5px;font-size:14px;color:#08d040;transform:scaleY(1.07);">S</span>
<span class="t" style="left:1450.5px;top:713.5px;font-size:14px;color:#dcdcdc;transform:scaleY(1.07);">14:55</span>
<span class="t" style="right:318px;top:713.5px;font-size:14px;color:#08d040;transform:scaleY(1.07);">29.44</span>
<span class="t" style="right:241.5px;top:713.5px;font-size:14px;color:#d8d800;transform:scaleY(1.07);">36</span>
<span class="t" style="left:1474.5px;width:400px;text-align:center;top:713.5px;font-size:14px;color:#ff3c3c;transform:scaleY(1.07);">B</span>
<span class="t" style="left:1450.5px;top:731.5px;font-size:14px;color:#dcdcdc;transform:scaleY(1.07);">14:55</span>
<span class="t" style="right:318px;top:731.5px;font-size:14px;color:#08d040;transform:scaleY(1.07);">29.44</span>
<span class="t" style="right:241.5px;top:731.5px;font-size:14px;color:#d8d800;transform:scaleY(1.07);">20</span>
<span class="t" style="left:1474.5px;width:400px;text-align:center;top:731.5px;font-size:14px;color:#ff3c3c;transform:scaleY(1.07);">B</span>
<span class="t" style="left:1450.5px;top:749.5px;font-size:14px;color:#dcdcdc;transform:scaleY(1.07);">14:55</span>
<span class="t" style="right:318px;top:749.5px;font-size:14px;color:#08d040;transform:scaleY(1.07);">29.36</span>
<span class="t" style="right:241.5px;top:749.5px;font-size:14px;color:#d8d800;transform:scaleY(1.07);">4</span>
<span class="t" style="left:1474.5px;width:400px;text-align:center;top:749.5px;font-size:14px;color:#08d040;transform:scaleY(1.07);">S</span>
<span class="t" style="left:1450.5px;top:767.5px;font-size:14px;color:#dcdcdc;transform:scaleY(1.07);">14:55</span>
<span class="t" style="right:318px;top:767.5px;font-size:14px;color:#08d040;transform:scaleY(1.07);">29.36</span>
<span class="t" style="right:241.5px;top:767.5px;font-size:14px;color:#d8d800;transform:scaleY(1.07);">25</span>
<span class="t" style="left:1474.5px;width:400px;text-align:center;top:767.5px;font-size:14px;color:#ff3c3c;transform:scaleY(1.07);">B</span>
<span class="t" style="left:1450.5px;top:785.5px;font-size:14px;color:#dcdcdc;transform:scaleY(1.07);">14:55</span>
<span class="t" style="right:318px;top:785.5px;font-size:14px;color:#08d040;transform:scaleY(1.07);">29.36</span>
<span class="t" style="right:241.5px;top:785.5px;font-size:14px;color:#d8d800;transform:scaleY(1.07);">13</span>
<span class="t" style="left:1474.5px;width:400px;text-align:center;top:785.5px;font-size:14px;color:#ff3c3c;transform:scaleY(1.07);">B</span>
<span class="t" style="left:1450.5px;top:803.5px;font-size:14px;color:#dcdcdc;transform:scaleY(1.07);">14:55</span>
<span class="t" style="right:318px;top:803.5px;font-size:14px;color:#08d040;transform:scaleY(1.07);">29.50</span>
<span class="t" style="right:241.5px;top:803.5px;font-size:14px;color:#d8d800;transform:scaleY(1.07);">10</span>
<span class="t" style="left:1474.5px;width:400px;text-align:center;top:803.5px;font-size:14px;color:#ff3c3c;transform:scaleY(1.07);">B</span>
<span class="t" style="left:1450.5px;top:821.5px;font-size:14px;color:#dcdcdc;transform:scaleY(1.07);">14:56</span>
<span class="t" style="right:318px;top:821.5px;font-size:14px;color:#08d040;transform:scaleY(1.07);">29.49</span>
<span class="t" style="right:241.5px;top:821.5px;font-size:14px;color:#d8d800;transform:scaleY(1.07);">9</span>
<span class="t" style="left:1474.5px;width:400px;text-align:center;top:821.5px;font-size:14px;color:#ff3c3c;transform:scaleY(1.07);">B</span>
<span class="t" style="left:1450.5px;top:839.5px;font-size:14px;color:#dcdcdc;transform:scaleY(1.07);">14:56</span>
<span class="t" style="right:318px;top:839.5px;font-size:14px;color:#08d040;transform:scaleY(1.07);">29.37</span>
<span class="t" style="right:241.5px;top:839.5px;font-size:14px;color:#d8d800;transform:scaleY(1.07);">3</span>
<span class="t" style="left:1474.5px;width:400px;text-align:center;top:839.5px;font-size:14px;color:#08d040;transform:scaleY(1.07);">S</span>
<span class="t" style="left:1450.5px;top:857.5px;font-size:14px;color:#dcdcdc;transform:scaleY(1.07);">14:56</span>
<span class="t" style="right:318px;top:857.5px;font-size:14px;color:#08d040;transform:scaleY(1.07);">29.37</span>
<span class="t" style="right:241.5px;top:857.5px;font-size:14px;color:#d8d800;transform:scaleY(1.07);">1</span>
<span class="t" style="left:1474.5px;width:400px;text-align:center;top:857.5px;font-size:14px;color:#08d040;transform:scaleY(1.07);">S</span>
<span class="t" style="left:1450.5px;top:875.5px;font-size:14px;color:#dcdcdc;transform:scaleY(1.07);">14:56</span>
<span class="t" style="right:318px;top:875.5px;font-size:14px;color:#08d040;transform:scaleY(1.07);">29.38</span>
<span class="t" style="right:241.5px;top:875.5px;font-size:14px;color:#d8d800;transform:scaleY(1.07);">2</span>
<span class="t" style="left:1474.5px;width:400px;text-align:center;top:875.5px;font-size:14px;color:#08d040;transform:scaleY(1.07);">S</span>
<span class="t" style="left:1450.5px;top:893.5px;font-size:14px;color:#dcdcdc;transform:scaleY(1.07);">14:56</span>
<span class="t" style="right:318px;top:893.5px;font-size:14px;color:#08d040;transform:scaleY(1.07);">29.38</span>
<span class="t" style="right:241.5px;top:893.5px;font-size:14px;color:#d8d800;transform:scaleY(1.07);">5</span>
<span class="t" style="left:1474.5px;width:400px;text-align:center;top:893.5px;font-size:14px;color:#08d040;transform:scaleY(1.07);">S</span>
<span class="t" style="left:1450.5px;top:911.5px;font-size:14px;color:#dcdcdc;transform:scaleY(1.07);">14:56</span>
<span class="t" style="right:318px;top:911.5px;font-size:14px;color:#08d040;transform:scaleY(1.07);">29.38</span>
<span class="t" style="right:241.5px;top:911.5px;font-size:14px;color:#d8d800;transform:scaleY(1.07);">7</span>
<span class="t" style="left:1474.5px;width:400px;text-align:center;top:911.5px;font-size:14px;color:#ff3c3c;transform:scaleY(1.07);">B</span>
<span class="t" style="left:1708px;top:48px;width:70px;height:21px;line-height:19px;box-sizing:border-box;border:1px solid #e03030;font-size:12px;color:#ff3c3c;text-align:center">闪电买入</span>
<span class="t" style="left:1798px;top:48px;width:70px;height:21px;line-height:19px;box-sizing:border-box;border:1px solid #00b830;font-size:12px;color:#08d040;text-align:center">闪电卖出</span>
<span class="t" style="left:1708px;top:72px;width:70px;height:21px;line-height:19px;box-sizing:border-box;border:1px solid #b0b0b0;font-size:12px;color:#dcdcdc;text-align:center">撤单查询</span>
<span class="t" style="left:1798px;top:72px;width:70px;height:21px;line-height:19px;box-sizing:border-box;border:1px solid #b0b0b0;font-size:12px;color:#dcdcdc;text-align:center">条件预警</span>
<div class="b" style="left:1896px;top:66px;width:4px;height:22px;background:linear-gradient(#5c5c5c,#343434);border-radius:2px 0 0 0"></div>
<div class="b" style="left:1896px;top:88px;width:4px;height:36px;background:linear-gradient(#10e070,#20b0f0);border-radius:0 0 0 2px"></div>
<span class="t" style="left:1689px;top:99.5px;font-size:14.5px;color:#dcdcdc;">920098</span>
<span class="t" style="left:1763.5px;top:99.5px;font-size:14px;color:#2a86ff;">单季</span>
<span class="t" style="left:1797.5px;top:99.5px;font-size:14px;color:#dcdcdc;">同季</span>
<span class="t" style="left:1831.5px;top:99.5px;font-size:14px;color:#dcdcdc;">财报</span>
<span class="t" style="left:1866px;top:99.5px;font-size:14px;color:#dcdcdc;">更多…</span>
<span class="t" style="left:1819px;top:121.6px;font-size:12px;color:#dcdcdc;">净利润(千万)</span>
<span class="t" style="right:176px;top:121.5px;font-size:12.5px;color:#dcdcdc;">4.41</span>
<span class="t" style="right:176px;top:140.5px;font-size:12.5px;color:#dcdcdc;">3.31</span>
<span class="t" style="right:176px;top:159.5px;font-size:12.5px;color:#dcdcdc;">2.21</span>
<span class="t" style="right:176px;top:178px;font-size:12.5px;color:#dcdcdc;">1.10</span>
<span class="t" style="right:176px;top:197px;font-size:12.5px;color:#dcdcdc;">0.00</span>
<div class="b" style="left:1728px;top:132px;width:1px;height:74px;background:#2e2e2e"></div>
<div class="b" style="left:1728px;top:206px;width:160px;height:1px;background:#2e2e2e"></div>
<div class="b" style="left:1755px;top:142px;width:6px;height:63px;background:#ff4400"></div>
<div class="b" style="left:1763px;top:168px;width:6px;height:37px;background:#ff4400"></div>
<div class="b" style="left:1792px;top:186px;width:6px;height:19px;background:#ff4400"></div>
<div class="b" style="left:1800px;top:174px;width:6px;height:31px;background:#ff4400"></div>
<div class="b" style="left:1808px;top:139px;width:6px;height:66px;background:#ff4400"></div>
<div class="b" style="left:1816px;top:174px;width:6px;height:31px;background:#ff4400"></div>
<div class="b" style="left:1845px;top:186px;width:6px;height:19px;background:#ff4400"></div>
<div class="b" style="left:1853px;top:175px;width:6px;height:30px;background:#ff4400"></div>
<div class="b" style="left:1861px;top:166px;width:6px;height:39px;background:#ff4400"></div>
<span class="t" style="left:1554px;width:400px;text-align:center;top:207px;font-size:12.5px;color:#dcdcdc;">2023</span>
<span class="t" style="left:1607px;width:400px;text-align:center;top:207px;font-size:12.5px;color:#dcdcdc;">2024</span>
<span class="t" style="left:1660.5px;width:400px;text-align:center;top:207px;font-size:12.5px;color:#dcdcdc;">2025</span>
<span class="t" style="left:1686px;top:226.4px;font-size:14px;color:#9c9c9c;">总收入</span>
<span class="t" style="right:107.5px;top:226.4px;font-size:14px;color:#dcdcdc;">3.53亿</span>
<span class="t" style="left:1795px;top:226.4px;font-size:14px;color:#9c9c9c;">同比%</span>
<span class="t" style="right:-0.8px;top:226.4px;font-size:14px;color:#dcdcdc;">0.87</span>
<span class="t" style="left:1686px;top:247px;font-size:14px;color:#9c9c9c;">净利润</span>
<span class="t" style="right:107.5px;top:247px;font-size:14px;color:#dcdcdc;">5129万</span>
<span class="t" style="left:1795px;top:247px;font-size:14px;color:#9c9c9c;">同比%</span>
<span class="t" style="right:0px;top:247px;font-size:14px;color:#dcdcdc;">-25.15</span>
<span class="t" style="left:1686px;top:268px;font-size:14px;color:#9c9c9c;">非经损</span>
<span class="t" style="right:107.5px;top:268px;font-size:14px;color:#dcdcdc;">416万</span>
<span class="t" style="left:1795px;top:268px;font-size:14px;color:#9c9c9c;">销售费</span>
<span class="t" style="right:-0.3px;top:268px;font-size:14px;color:#dcdcdc;">1627万</span>
<span class="t" style="left:1686px;top:289px;font-size:14px;color:#9c9c9c;">货币金i</span>
<span class="t" style="right:107.5px;top:289px;font-size:14px;color:#dcdcdc;">1.61亿</span>
<span class="t" style="left:1795px;top:289px;font-size:14px;color:#9c9c9c;">应收款</span>
<span class="t" style="right:-0.3px;top:289px;font-size:14px;color:#dcdcdc;">3.88亿</span>
<span class="t" style="left:1594.5px;width:400px;text-align:center;top:303.5px;font-size:11px;color:#dcdcdc;">v</span>
<div class="b" style="left:1686px;top:320px;width:214px;height:1px;background:#2e2e2e"></div>
<span class="t" style="left:1686px;top:320.5px;font-size:14px;color:#9c9c9c;">PE <small>TTM</small></span>
<span class="t" style="right:107.5px;top:320.5px;font-size:14px;color:#dcdcdc;">35.4</span>
<span class="t" style="left:1795px;top:320.5px;font-size:14px;color:#9c9c9c;">PB <small>MRQ</small></span>
<span class="t" style="right:-0.3px;top:320.5px;font-size:14px;color:#dcdcdc;">2.64</span>
<span class="t" style="left:1686px;top:341.5px;font-size:14px;color:#9c9c9c;">PEG<small>i</small></span>
<span class="t" style="right:107.5px;top:341.5px;font-size:14px;color:#dcdcdc;">-1.69</span>
<span class="t" style="left:1795px;top:341.5px;font-size:14px;color:#9c9c9c;">PS <small>TTM</small></span>
<span class="t" style="right:-0.3px;top:341.5px;font-size:14px;color:#dcdcdc;">5.08</span>
<span class="t" style="left:1686px;top:362.5px;font-size:14px;color:#9c9c9c;">毛利率</span>
<span class="t" style="right:107.5px;top:362.5px;font-size:14px;color:#dcdcdc;">34.60</span>
<span class="t" style="left:1795px;top:362.5px;font-size:14px;color:#9c9c9c;">净利率</span>
<span class="t" style="right:-0.3px;top:362.5px;font-size:14px;color:#dcdcdc;">14.55</span>
<span class="t" style="left:1686px;top:383.5px;font-size:14px;color:#9c9c9c;">ROE <small>③</small></span>
<span class="t" style="right:107.5px;top:383.5px;font-size:14px;color:#dcdcdc;">5.48%</span>
<span class="t" style="left:1795px;top:383.5px;font-size:14px;color:#9c9c9c;">负债率</span>
<span class="t" style="right:-0.3px;top:383.5px;font-size:14px;color:#dcdcdc;">17.20</span>
<div class="b" style="left:1686px;top:407px;width:214px;height:1px;background:#2e2e2e"></div>
<span class="t" style="left:1686px;top:412px;font-size:14px;color:#9c9c9c;">20日i</span>
<span class="t" style="right:107.5px;top:412px;font-size:14px;color:#dcdcdc;">12.1%</span>
<span class="t" style="left:1795px;top:412px;font-size:14px;color:#9c9c9c;">今年来</span>
<span class="t" style="right:-0.3px;top:412px;font-size:14px;color:#dcdcdc;">3.0%</span>
<span class="t" style="left:1686px;top:433px;font-size:14px;color:#9c9c9c;">60日</span>
<span class="t" style="right:107.5px;top:433px;font-size:14px;color:#dcdcdc;">-2.1%</span>
<span class="t" style="left:1795px;top:433px;font-size:14px;color:#9c9c9c;">Beta值</span>
<span class="t" style="right:-0.3px;top:433px;font-size:14px;color:#dcdcdc;">0.57</span>
<span class="t" style="left:1686px;top:454px;font-size:14px;color:#9c9c9c;">年最高</span>
<span class="t" style="right:107.5px;top:454px;font-size:14px;color:#dcdcdc;">42.19</span>
<span class="t" style="left:1795px;top:454px;font-size:14px;color:#9c9c9c;">年最低</span>
<span class="t" style="right:-0.3px;top:454px;font-size:14px;color:#dcdcdc;">22.73</span>
<span class="t" style="left:1686px;top:475px;font-size:14px;color:#9c9c9c;">总市值i</span>
<span class="t" style="right:107.5px;top:475px;font-size:14px;color:#dcdcdc;">24.69亿</span>
<span class="t" style="left:1795px;top:475px;font-size:14px;color:#9c9c9c;">流通值i</span>
<span class="t" style="right:-0.3px;top:475px;font-size:14px;color:#dcdcdc;">16.75亿</span>
<div class="b" style="left:1686px;top:498px;width:214px;height:1px;background:#2e2e2e"></div>
<span class="t" style="left:1686px;top:503px;font-size:14px;color:#9c9c9c;">股东</span>
<span class="t" style="right:78.5px;top:503px;font-size:14px;color:#dcdcdc;letter-spacing:0.6px">25-09-30</span>
<span class="t" style="right:-3.2px;top:503px;font-size:14px;color:#dcdcdc;letter-spacing:0.6px">25-06-30</span>
<span class="t" style="left:1686px;top:524px;font-size:14px;color:#9c9c9c;">户数</span>
<span class="t" style="right:79px;top:524px;font-size:14px;color:#dcdcdc;">5216</span>
<span class="t" style="right:-2.2px;top:524px;font-size:14px;color:#dcdcdc;">6592</span>
<span class="t" style="left:1686px;top:545px;font-size:14px;color:#9c9c9c;">较上期</span>
<span class="t" style="right:79px;top:545px;font-size:14px;color:#dcdcdc;">-20.87%</span>
<span class="t" style="right:-1.2px;top:545px;font-size:14px;color:#dcdcdc;">11.46%</span>
<div class="b" style="left:1686px;top:568px;width:214px;height:1px;background:#2e2e2e"></div>
<span class="t" style="left:1686px;top:573px;font-size:14px;color:#f0f0f0;">眼光</span>
<span class="t" style="left:1770px;top:573px;font-size:14px;color:#dcdcdc;">今日</span>
<span class="t" style="left:1804px;top:573px;font-size:14px;color:#2a86ff;">本周</span>
<span class="t" style="left:1838px;top:573px;font-size:14px;color:#dcdcdc;">本月</span>
<span class="t" style="left:1872px;top:573px;font-size:14px;color:#dcdcdc;">本年</span>
<span class="t" style="left:1686px;top:593.5px;font-size:12px;color:#e8203c;">看多</span>
<span class="t" style="left:1716px;top:593.5px;font-size:12.5px;color:#dcdcdc;">3人</span>
<span class="t" style="left:1854px;top:593.5px;font-size:12.5px;color:#dcdcdc;">2人</span>
<span class="t" style="left:1878.5px;top:593.5px;font-size:12px;color:#4aa832;">看空</span>
<svg class="b" style="left:1684px;top:616px" width="216" height="20" viewBox="1684 616 216 20"><path d="M1695,617H1816L1812,635H1695A9,9 0 0 1 1695,617Z" fill="#dc2440"/><path d="M1820,617H1905V635H1816Z" fill="#4aa832"/><circle cx="1694.7" cy="626" r="8.3" fill="#fff"/><circle cx="1893.6" cy="626" r="8.3" fill="#fff"/><path d="M1689.5,625.5v5.5h2.3v-5.5zM1693,625.5l2.8,-4.8q1.9,0.2 1.4,2.2l-0.5,1.8h3.6q0.6,0.5 0.3,1.4l-1.1,4.4q-0.3,0.5 -1,0.5h-5.5z" fill="none" stroke="#e8808c" stroke-width="1"/><path d="M1899.5,626.5v-5.5h-2.3v5.5zM1896,626.5l-2.8,4.8q-1.9,-0.2 -1.4,-2.2l0.5,-1.8h-3.6q-0.6,-0.5 -0.3,-1.4l1.1,-4.4q0.3,-0.5 1,-0.5h5.5z" fill="none" stroke="#8cc878" stroke-width="1"/></svg>
<span class="t" style="left:1707px;top:616.5px;font-size:12px;color:#fff;">60%</span>
<span class="t" style="right:18.8px;top:616.5px;font-size:12px;color:#fff;">40%</span>
<div class="b" style="left:1686px;top:641px;width:214px;height:1px;background:#2e2e2e"></div>
<span class="t" style="left:1686px;top:646px;font-size:14px;color:#9c9c9c;">法人1<small> ③</small></span>
<span class="t" style="left:1748px;top:646px;font-size:14px;color:#dcdcdc;">5家</span>
<span class="t" style="right:44px;top:646px;font-size:14px;color:#dcdcdc;">1312万股</span>
<span class="t" style="left:1863px;top:646px;font-size:14px;color:#dcdcdc;">30.1%</span>
<div class="b" style="left:1686px;top:665px;width:214px;height:1px;background:#262626"></div>
<span class="t" style="left:1686px;top:670.5px;font-size:14px;color:#9c9c9c;">分红</span>
<span class="t" style="right:105.5px;top:670.5px;font-size:14px;color:#dcdcdc;">2440万(1)</span>
<span class="t" style="left:1797px;top:670.5px;font-size:14px;color:#9c9c9c;">募资</span>
<span class="t" style="right:-0.3px;top:670.5px;font-size:14px;color:#dcdcdc;">2.42亿(1)</span>
<div class="b" style="left:1686px;top:693px;width:214px;height:1px;background:#262626"></div>
<span class="t" style="left:1686px;top:698.5px;font-size:14px;color:#9c9c9c;">融资占比</span>
<span class="t" style="right:108.3px;top:698.5px;font-size:14px;color:#dcdcdc;">1.60%</span>
<span class="t" style="left:1794px;top:698.5px;font-size:14px;color:#9c9c9c;">融券占比</span>
<span class="t" style="right:-0.6px;top:698.5px;font-size:14px;color:#dcdcdc;">0.00%</span>
<div class="b" style="left:1686px;top:721px;width:214px;height:1px;background:#2e2e2e"></div>
<span class="t" style="left:1687px;top:726px;font-size:14px;color:#9c9c9c;">日期</span>
<span class="t" style="right:79px;top:726px;font-size:14px;color:#9c9c9c;">融资余额</span>
<span class="t" style="right:-3px;top:726px;font-size:14px;color:#9c9c9c;">融券余量</span>
<span class="t" style="left:1687px;top:746px;font-size:14px;color:#ff9000;letter-spacing:0.5px">12-22</span>
<span class="t" style="right:79.8px;top:746px;font-size:14.8px;color:#ff9000;">2683万<i>↓</i></span>
<span class="t" style="right:5px;top:746px;font-size:14px;color:#ff9000;">0</span>
<span class="t" style="left:1687px;top:766.6px;font-size:14px;color:#dcdcdc;letter-spacing:0.5px">12-19</span>
<span class="t" style="right:79.8px;top:766.6px;font-size:14.8px;color:#dcdcdc;">2686万<i>↑</i></span>
<span class="t" style="right:5px;top:766.6px;font-size:14px;color:#dcdcdc;">0</span>
<span class="t" style="left:1687px;top:787.2px;font-size:14px;color:#dcdcdc;letter-spacing:0.5px">12-18</span>
<span class="t" style="right:79.8px;top:787.2px;font-size:14.8px;color:#dcdcdc;">2615万<i>↑</i></span>
<span class="t" style="right:5px;top:787.2px;font-size:14px;color:#dcdcdc;">0</span>
<div class="b" style="left:1686px;top:811px;width:214px;height:1px;background:#2e2e2e"></div>
<span class="t" style="left:1687px;top:816.5px;font-size:14px;color:#9c9c9c;">日期</span>
<span class="t" style="right:79px;top:816.5px;font-size:14px;color:#9c9c9c;">大宗交易价</span>
<span class="t" style="right:-3px;top:816.5px;font-size:14px;color:#9c9c9c;">成交额</span>
<span class="t" style="left:1687px;top:835.5px;font-size:14px;color:#dcdcdc;letter-spacing:0.5px">12-17</span>
<span class="t" style="right:79px;top:835.5px;font-size:14px;color:#dcdcdc;">25.12</span>
<span class="t" style="right:-3px;top:835.5px;font-size:14px;color:#dcdcdc;">729万</span>
<div class="b" style="left:1686px;top:859px;width:214px;height:1px;background:#2e2e2e"></div>
<span class="t" style="left:1687px;top:864px;font-size:14px;color:#9c9c9c;">公司</span>
<span class="t" style="left:1723px;top:864px;font-size:14px;color:#dcdcdc;">陕西科隆新材料科技股份有…</span>
<span class="t" style="left:1687px;top:885px;font-size:14px;color:#9c9c9c;">控股</span>
<span class="t" style="left:1723px;top:885px;font-size:14px;color:#dcdcdc;">邹威文,穆倩</span>
<span class="t" style="left:1687px;top:906px;font-size:14px;color:#9c9c9c;">主营</span>
<span class="t" style="left:1723px;top:906px;font-size:14px;color:#dcdcdc;">液压组合密封件和液压软管…</span>
</body></html>
